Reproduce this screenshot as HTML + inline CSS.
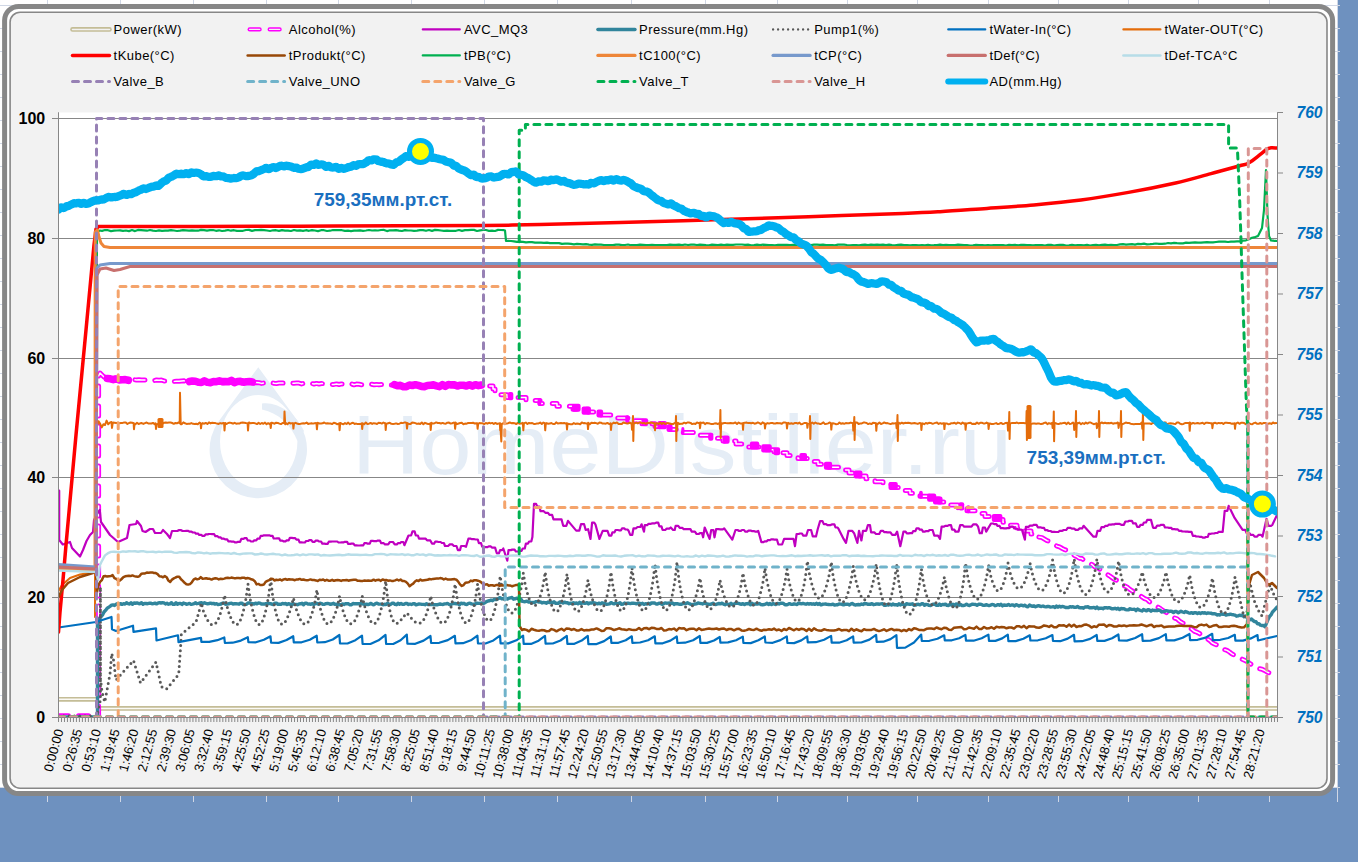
<!DOCTYPE html>
<html><head><meta charset="utf-8"><title>chart</title>
<style>html,body{margin:0;padding:0;width:1358px;height:862px;overflow:hidden;background:#6e91bf;}svg{display:block}</style>
</head><body>
<svg width="1358" height="862" viewBox="0 0 1358 862">
<rect x="0" y="0" width="1358" height="862" fill="#6e91bf"/>
<rect x="0" y="0" width="1338" height="788" fill="#ffffff"/>
<path d="M0 5.5H1340M0 28.5H1340M0 51.5H1340M0 74.5H1340M0 97.5H1340M0 120.5H1340M0 143.5H1340M0 166.5H1340M0 189.5H1340M0 212.5H1340M0 235.5H1340M0 258.5H1340M0 281.5H1340M0 304.5H1340M0 327.5H1340M0 350.5H1340M0 373.5H1340M0 396.5H1340M0 419.5H1340M0 442.5H1340M0 465.5H1340M0 488.5H1340M0 511.5H1340M0 534.5H1340M0 557.5H1340M0 580.5H1340M0 603.5H1340M0 626.5H1340M0 649.5H1340M0 672.5H1340M0 695.5H1340M0 718.5H1340M0 741.5H1340M0 764.5H1340M0 787.5H1340M47.5 0V802M120.5 0V802M193.5 0V802M266.5 0V802M338.5 0V802M411.5 0V802M484.5 0V802M557.5 0V802M631.5 0V802M705.5 0V802M777.5 0V802M847.5 0V802M917.5 0V802M988.5 0V802M1058.5 0V802M1128.5 0V802M1198.5 0V802M1269.5 0V802M1337.5 0V802" stroke="#d0d7e5" stroke-width="1" fill="none"/>
<rect x="4.6" y="6.5" width="1328" height="787" rx="14" ry="14" fill="#ffffff" stroke="#878787" stroke-width="5"/>
<rect x="10.1" y="12.2" width="1316.9" height="776" rx="10" ry="10" fill="#f2f2f2" stroke="#878787" stroke-width="1.6"/>
<rect x="58.5" y="112.5" width="1219.0" height="605.0" fill="#ffffff"/>
<g fill="#e5edf6"><path fill-rule="evenodd" d="M258.3 367.2 L297.55 420.7 A48.7 48.7 0 1 1 219.05 420.7 Z M258.7 395 A38.7 46.5 0 1 0 258.71 395 Z"/><path d="M262 403.5 C276 401 296 413 304 431 L297.5 441 C291 425 279 413 262 409.5 Z"/></g>
<text x="352" y="474" font-family='"Liberation Sans", sans-serif' font-size="84" fill="#e5edf6" textLength="660" lengthAdjust="spacingAndGlyphs">HomeDistiller.ru</text>
<path d="M52 118.5H1277.5M52 238.5H1277.5M52 358.5H1277.5M52 477.5H1277.5M52 597.5H1277.5M52 717.5H1277.5M58.5 112.5V717.5M1277.5 112.5V717.5M1277.5 112.5H1283M1277.5 173.0H1283M1277.5 233.5H1283M1277.5 294.0H1283M1277.5 354.5H1283M1277.5 415.0H1283M1277.5 475.5H1283M1277.5 536.0H1283M1277.5 596.5H1283M1277.5 657.0H1283M1277.5 717.5H1283M58.50 717.5V722M61.49 717.5V722M64.48 717.5V722M67.46 717.5V722M70.45 717.5V722M73.44 717.5V722M76.43 717.5V722M79.41 717.5V722M82.40 717.5V722M85.39 717.5V722M88.38 717.5V722M91.37 717.5V722M94.35 717.5V722M97.34 717.5V722M100.33 717.5V722M103.32 717.5V722M106.30 717.5V722M109.29 717.5V722M112.28 717.5V722M115.27 717.5V722M118.25 717.5V722M121.24 717.5V722M124.23 717.5V722M127.22 717.5V722M130.21 717.5V722M133.19 717.5V722M136.18 717.5V722M139.17 717.5V722M142.16 717.5V722M145.14 717.5V722M148.13 717.5V722M151.12 717.5V722M154.11 717.5V722M157.10 717.5V722M160.08 717.5V722M163.07 717.5V722M166.06 717.5V722M169.05 717.5V722M172.03 717.5V722M175.02 717.5V722M178.01 717.5V722M181.00 717.5V722M183.99 717.5V722M186.97 717.5V722M189.96 717.5V722M192.95 717.5V722M195.94 717.5V722M198.92 717.5V722M201.91 717.5V722M204.90 717.5V722M207.89 717.5V722M210.88 717.5V722M213.86 717.5V722M216.85 717.5V722M219.84 717.5V722M222.83 717.5V722M225.81 717.5V722M228.80 717.5V722M231.79 717.5V722M234.78 717.5V722M237.76 717.5V722M240.75 717.5V722M243.74 717.5V722M246.73 717.5V722M249.72 717.5V722M252.70 717.5V722M255.69 717.5V722M258.68 717.5V722M261.67 717.5V722M264.65 717.5V722M267.64 717.5V722M270.63 717.5V722M273.62 717.5V722M276.61 717.5V722M279.59 717.5V722M282.58 717.5V722M285.57 717.5V722M288.56 717.5V722M291.54 717.5V722M294.53 717.5V722M297.52 717.5V722M300.51 717.5V722M303.50 717.5V722M306.48 717.5V722M309.47 717.5V722M312.46 717.5V722M315.45 717.5V722M318.43 717.5V722M321.42 717.5V722M324.41 717.5V722M327.40 717.5V722M330.38 717.5V722M333.37 717.5V722M336.36 717.5V722M339.35 717.5V722M342.34 717.5V722M345.32 717.5V722M348.31 717.5V722M351.30 717.5V722M354.29 717.5V722M357.27 717.5V722M360.26 717.5V722M363.25 717.5V722M366.24 717.5V722M369.23 717.5V722M372.21 717.5V722M375.20 717.5V722M378.19 717.5V722M381.18 717.5V722M384.16 717.5V722M387.15 717.5V722M390.14 717.5V722M393.13 717.5V722M396.12 717.5V722M399.10 717.5V722M402.09 717.5V722M405.08 717.5V722M408.07 717.5V722M411.05 717.5V722M414.04 717.5V722M417.03 717.5V722M420.02 717.5V722M423.00 717.5V722M425.99 717.5V722M428.98 717.5V722M431.97 717.5V722M434.96 717.5V722M437.94 717.5V722M440.93 717.5V722M443.92 717.5V722M446.91 717.5V722M449.89 717.5V722M452.88 717.5V722M455.87 717.5V722M458.86 717.5V722M461.85 717.5V722M464.83 717.5V722M467.82 717.5V722M470.81 717.5V722M473.80 717.5V722M476.78 717.5V722M479.77 717.5V722M482.76 717.5V722M485.75 717.5V722M488.74 717.5V722M491.72 717.5V722M494.71 717.5V722M497.70 717.5V722M500.69 717.5V722M503.67 717.5V722M506.66 717.5V722M509.65 717.5V722M512.64 717.5V722M515.62 717.5V722M518.61 717.5V722M521.60 717.5V722M524.59 717.5V722M527.58 717.5V722M530.56 717.5V722M533.55 717.5V722M536.54 717.5V722M539.53 717.5V722M542.51 717.5V722M545.50 717.5V722M548.49 717.5V722M551.48 717.5V722M554.47 717.5V722M557.45 717.5V722M560.44 717.5V722M563.43 717.5V722M566.42 717.5V722M569.40 717.5V722M572.39 717.5V722M575.38 717.5V722M578.37 717.5V722M581.36 717.5V722M584.34 717.5V722M587.33 717.5V722M590.32 717.5V722M593.31 717.5V722M596.29 717.5V722M599.28 717.5V722M602.27 717.5V722M605.26 717.5V722M608.25 717.5V722M611.23 717.5V722M614.22 717.5V722M617.21 717.5V722M620.20 717.5V722M623.18 717.5V722M626.17 717.5V722M629.16 717.5V722M632.15 717.5V722M635.13 717.5V722M638.12 717.5V722M641.11 717.5V722M644.10 717.5V722M647.09 717.5V722M650.07 717.5V722M653.06 717.5V722M656.05 717.5V722M659.04 717.5V722M662.02 717.5V722M665.01 717.5V722M668.00 717.5V722M670.99 717.5V722M673.98 717.5V722M676.96 717.5V722M679.95 717.5V722M682.94 717.5V722M685.93 717.5V722M688.91 717.5V722M691.90 717.5V722M694.89 717.5V722M697.88 717.5V722M700.87 717.5V722M703.85 717.5V722M706.84 717.5V722M709.83 717.5V722M712.82 717.5V722M715.80 717.5V722M718.79 717.5V722M721.78 717.5V722M724.77 717.5V722M727.75 717.5V722M730.74 717.5V722M733.73 717.5V722M736.72 717.5V722M739.71 717.5V722M742.69 717.5V722M745.68 717.5V722M748.67 717.5V722M751.66 717.5V722M754.64 717.5V722M757.63 717.5V722M760.62 717.5V722M763.61 717.5V722M766.60 717.5V722M769.58 717.5V722M772.57 717.5V722M775.56 717.5V722M778.55 717.5V722M781.53 717.5V722M784.52 717.5V722M787.51 717.5V722M790.50 717.5V722M793.49 717.5V722M796.47 717.5V722M799.46 717.5V722M802.45 717.5V722M805.44 717.5V722M808.42 717.5V722M811.41 717.5V722M814.40 717.5V722M817.39 717.5V722M820.38 717.5V722M823.36 717.5V722M826.35 717.5V722M829.34 717.5V722M832.33 717.5V722M835.31 717.5V722M838.30 717.5V722M841.29 717.5V722M844.28 717.5V722M847.26 717.5V722M850.25 717.5V722M853.24 717.5V722M856.23 717.5V722M859.22 717.5V722M862.20 717.5V722M865.19 717.5V722M868.18 717.5V722M871.17 717.5V722M874.15 717.5V722M877.14 717.5V722M880.13 717.5V722M883.12 717.5V722M886.11 717.5V722M889.09 717.5V722M892.08 717.5V722M895.07 717.5V722M898.06 717.5V722M901.04 717.5V722M904.03 717.5V722M907.02 717.5V722M910.01 717.5V722M913.00 717.5V722M915.98 717.5V722M918.97 717.5V722M921.96 717.5V722M924.95 717.5V722M927.93 717.5V722M930.92 717.5V722M933.91 717.5V722M936.90 717.5V722M939.88 717.5V722M942.87 717.5V722M945.86 717.5V722M948.85 717.5V722M951.84 717.5V722M954.82 717.5V722M957.81 717.5V722M960.80 717.5V722M963.79 717.5V722M966.77 717.5V722M969.76 717.5V722M972.75 717.5V722M975.74 717.5V722M978.73 717.5V722M981.71 717.5V722M984.70 717.5V722M987.69 717.5V722M990.68 717.5V722M993.66 717.5V722M996.65 717.5V722M999.64 717.5V722M1002.63 717.5V722M1005.62 717.5V722M1008.60 717.5V722M1011.59 717.5V722M1014.58 717.5V722M1017.57 717.5V722M1020.55 717.5V722M1023.54 717.5V722M1026.53 717.5V722M1029.52 717.5V722M1032.50 717.5V722M1035.49 717.5V722M1038.48 717.5V722M1041.47 717.5V722M1044.46 717.5V722M1047.44 717.5V722M1050.43 717.5V722M1053.42 717.5V722M1056.41 717.5V722M1059.39 717.5V722M1062.38 717.5V722M1065.37 717.5V722M1068.36 717.5V722M1071.35 717.5V722M1074.33 717.5V722M1077.32 717.5V722M1080.31 717.5V722M1083.30 717.5V722M1086.28 717.5V722M1089.27 717.5V722M1092.26 717.5V722M1095.25 717.5V722M1098.24 717.5V722M1101.22 717.5V722M1104.21 717.5V722M1107.20 717.5V722M1110.19 717.5V722M1113.17 717.5V722M1116.16 717.5V722M1119.15 717.5V722M1122.14 717.5V722M1125.12 717.5V722M1128.11 717.5V722M1131.10 717.5V722M1134.09 717.5V722M1137.08 717.5V722M1140.06 717.5V722M1143.05 717.5V722M1146.04 717.5V722M1149.03 717.5V722M1152.01 717.5V722M1155.00 717.5V722M1157.99 717.5V722M1160.98 717.5V722M1163.97 717.5V722M1166.95 717.5V722M1169.94 717.5V722M1172.93 717.5V722M1175.92 717.5V722M1178.90 717.5V722M1181.89 717.5V722M1184.88 717.5V722M1187.87 717.5V722M1190.86 717.5V722M1193.84 717.5V722M1196.83 717.5V722M1199.82 717.5V722M1202.81 717.5V722M1205.79 717.5V722M1208.78 717.5V722M1211.77 717.5V722M1214.76 717.5V722M1217.75 717.5V722M1220.73 717.5V722M1223.72 717.5V722M1226.71 717.5V722M1229.70 717.5V722M1232.68 717.5V722M1235.67 717.5V722M1238.66 717.5V722M1241.65 717.5V722M1244.63 717.5V722M1247.62 717.5V722M1250.61 717.5V722M1253.60 717.5V722M1256.59 717.5V722M1259.57 717.5V722M1262.56 717.5V722M1265.55 717.5V722M1268.54 717.5V722M1271.52 717.5V722M1274.51 717.5V722M1277.50 717.5V722" stroke="#878787" stroke-width="1" fill="none"/>
<text x="45.2" y="124.0" text-anchor="end" font-family='"Liberation Sans", sans-serif' font-weight="bold" font-size="16" fill="#000">100</text>
<text x="45.2" y="244.0" text-anchor="end" font-family='"Liberation Sans", sans-serif' font-weight="bold" font-size="16" fill="#000">80</text>
<text x="45.2" y="364.0" text-anchor="end" font-family='"Liberation Sans", sans-serif' font-weight="bold" font-size="16" fill="#000">60</text>
<text x="45.2" y="483.0" text-anchor="end" font-family='"Liberation Sans", sans-serif' font-weight="bold" font-size="16" fill="#000">40</text>
<text x="45.2" y="603.0" text-anchor="end" font-family='"Liberation Sans", sans-serif' font-weight="bold" font-size="16" fill="#000">20</text>
<text x="45.2" y="723.0" text-anchor="end" font-family='"Liberation Sans", sans-serif' font-weight="bold" font-size="16" fill="#000">0</text>
<text x="1296.5" y="117.7" font-family='"Liberation Sans", sans-serif' font-weight="bold" font-style="italic" font-size="15.6" fill="#0070c0">760</text>
<text x="1296.5" y="178.2" font-family='"Liberation Sans", sans-serif' font-weight="bold" font-style="italic" font-size="15.6" fill="#0070c0">759</text>
<text x="1296.5" y="238.7" font-family='"Liberation Sans", sans-serif' font-weight="bold" font-style="italic" font-size="15.6" fill="#0070c0">758</text>
<text x="1296.5" y="299.2" font-family='"Liberation Sans", sans-serif' font-weight="bold" font-style="italic" font-size="15.6" fill="#0070c0">757</text>
<text x="1296.5" y="359.7" font-family='"Liberation Sans", sans-serif' font-weight="bold" font-style="italic" font-size="15.6" fill="#0070c0">756</text>
<text x="1296.5" y="420.2" font-family='"Liberation Sans", sans-serif' font-weight="bold" font-style="italic" font-size="15.6" fill="#0070c0">755</text>
<text x="1296.5" y="480.7" font-family='"Liberation Sans", sans-serif' font-weight="bold" font-style="italic" font-size="15.6" fill="#0070c0">754</text>
<text x="1296.5" y="541.2" font-family='"Liberation Sans", sans-serif' font-weight="bold" font-style="italic" font-size="15.6" fill="#0070c0">753</text>
<text x="1296.5" y="601.7" font-family='"Liberation Sans", sans-serif' font-weight="bold" font-style="italic" font-size="15.6" fill="#0070c0">752</text>
<text x="1296.5" y="662.2" font-family='"Liberation Sans", sans-serif' font-weight="bold" font-style="italic" font-size="15.6" fill="#0070c0">751</text>
<text x="1296.5" y="722.7" font-family='"Liberation Sans", sans-serif' font-weight="bold" font-style="italic" font-size="15.6" fill="#0070c0">750</text>
<text transform="translate(63.50,730.5) rotate(-75)" text-anchor="end" font-family='"Liberation Sans", sans-serif' font-size="13" fill="#000">0:00:00</text>
<text transform="translate(82.27,730.5) rotate(-75)" text-anchor="end" font-family='"Liberation Sans", sans-serif' font-size="13" fill="#000">0:26:35</text>
<text transform="translate(101.04,730.5) rotate(-75)" text-anchor="end" font-family='"Liberation Sans", sans-serif' font-size="13" fill="#000">0:53:10</text>
<text transform="translate(119.81,730.5) rotate(-75)" text-anchor="end" font-family='"Liberation Sans", sans-serif' font-size="13" fill="#000">1:19:45</text>
<text transform="translate(138.58,730.5) rotate(-75)" text-anchor="end" font-family='"Liberation Sans", sans-serif' font-size="13" fill="#000">1:46:20</text>
<text transform="translate(157.35,730.5) rotate(-75)" text-anchor="end" font-family='"Liberation Sans", sans-serif' font-size="13" fill="#000">2:12:55</text>
<text transform="translate(176.12,730.5) rotate(-75)" text-anchor="end" font-family='"Liberation Sans", sans-serif' font-size="13" fill="#000">2:39:30</text>
<text transform="translate(194.89,730.5) rotate(-75)" text-anchor="end" font-family='"Liberation Sans", sans-serif' font-size="13" fill="#000">3:06:05</text>
<text transform="translate(213.66,730.5) rotate(-75)" text-anchor="end" font-family='"Liberation Sans", sans-serif' font-size="13" fill="#000">3:32:40</text>
<text transform="translate(232.43,730.5) rotate(-75)" text-anchor="end" font-family='"Liberation Sans", sans-serif' font-size="13" fill="#000">3:59:15</text>
<text transform="translate(251.20,730.5) rotate(-75)" text-anchor="end" font-family='"Liberation Sans", sans-serif' font-size="13" fill="#000">4:25:50</text>
<text transform="translate(269.97,730.5) rotate(-75)" text-anchor="end" font-family='"Liberation Sans", sans-serif' font-size="13" fill="#000">4:52:25</text>
<text transform="translate(288.74,730.5) rotate(-75)" text-anchor="end" font-family='"Liberation Sans", sans-serif' font-size="13" fill="#000">5:19:00</text>
<text transform="translate(307.51,730.5) rotate(-75)" text-anchor="end" font-family='"Liberation Sans", sans-serif' font-size="13" fill="#000">5:45:35</text>
<text transform="translate(326.28,730.5) rotate(-75)" text-anchor="end" font-family='"Liberation Sans", sans-serif' font-size="13" fill="#000">6:12:10</text>
<text transform="translate(345.05,730.5) rotate(-75)" text-anchor="end" font-family='"Liberation Sans", sans-serif' font-size="13" fill="#000">6:38:45</text>
<text transform="translate(363.82,730.5) rotate(-75)" text-anchor="end" font-family='"Liberation Sans", sans-serif' font-size="13" fill="#000">7:05:20</text>
<text transform="translate(382.59,730.5) rotate(-75)" text-anchor="end" font-family='"Liberation Sans", sans-serif' font-size="13" fill="#000">7:31:55</text>
<text transform="translate(401.36,730.5) rotate(-75)" text-anchor="end" font-family='"Liberation Sans", sans-serif' font-size="13" fill="#000">7:58:30</text>
<text transform="translate(420.13,730.5) rotate(-75)" text-anchor="end" font-family='"Liberation Sans", sans-serif' font-size="13" fill="#000">8:25:05</text>
<text transform="translate(438.90,730.5) rotate(-75)" text-anchor="end" font-family='"Liberation Sans", sans-serif' font-size="13" fill="#000">8:51:40</text>
<text transform="translate(457.67,730.5) rotate(-75)" text-anchor="end" font-family='"Liberation Sans", sans-serif' font-size="13" fill="#000">9:18:15</text>
<text transform="translate(476.44,730.5) rotate(-75)" text-anchor="end" font-family='"Liberation Sans", sans-serif' font-size="13" fill="#000">9:44:50</text>
<text transform="translate(495.21,730.5) rotate(-75)" text-anchor="end" font-family='"Liberation Sans", sans-serif' font-size="13" fill="#000">10:11:25</text>
<text transform="translate(513.98,730.5) rotate(-75)" text-anchor="end" font-family='"Liberation Sans", sans-serif' font-size="13" fill="#000">10:38:00</text>
<text transform="translate(532.75,730.5) rotate(-75)" text-anchor="end" font-family='"Liberation Sans", sans-serif' font-size="13" fill="#000">11:04:35</text>
<text transform="translate(551.52,730.5) rotate(-75)" text-anchor="end" font-family='"Liberation Sans", sans-serif' font-size="13" fill="#000">11:31:10</text>
<text transform="translate(570.29,730.5) rotate(-75)" text-anchor="end" font-family='"Liberation Sans", sans-serif' font-size="13" fill="#000">11:57:45</text>
<text transform="translate(589.06,730.5) rotate(-75)" text-anchor="end" font-family='"Liberation Sans", sans-serif' font-size="13" fill="#000">12:24:20</text>
<text transform="translate(607.83,730.5) rotate(-75)" text-anchor="end" font-family='"Liberation Sans", sans-serif' font-size="13" fill="#000">12:50:55</text>
<text transform="translate(626.60,730.5) rotate(-75)" text-anchor="end" font-family='"Liberation Sans", sans-serif' font-size="13" fill="#000">13:17:30</text>
<text transform="translate(645.37,730.5) rotate(-75)" text-anchor="end" font-family='"Liberation Sans", sans-serif' font-size="13" fill="#000">13:44:05</text>
<text transform="translate(664.14,730.5) rotate(-75)" text-anchor="end" font-family='"Liberation Sans", sans-serif' font-size="13" fill="#000">14:10:40</text>
<text transform="translate(682.91,730.5) rotate(-75)" text-anchor="end" font-family='"Liberation Sans", sans-serif' font-size="13" fill="#000">14:37:15</text>
<text transform="translate(701.68,730.5) rotate(-75)" text-anchor="end" font-family='"Liberation Sans", sans-serif' font-size="13" fill="#000">15:03:50</text>
<text transform="translate(720.45,730.5) rotate(-75)" text-anchor="end" font-family='"Liberation Sans", sans-serif' font-size="13" fill="#000">15:30:25</text>
<text transform="translate(739.22,730.5) rotate(-75)" text-anchor="end" font-family='"Liberation Sans", sans-serif' font-size="13" fill="#000">15:57:00</text>
<text transform="translate(757.99,730.5) rotate(-75)" text-anchor="end" font-family='"Liberation Sans", sans-serif' font-size="13" fill="#000">16:23:35</text>
<text transform="translate(776.76,730.5) rotate(-75)" text-anchor="end" font-family='"Liberation Sans", sans-serif' font-size="13" fill="#000">16:50:10</text>
<text transform="translate(795.53,730.5) rotate(-75)" text-anchor="end" font-family='"Liberation Sans", sans-serif' font-size="13" fill="#000">17:16:45</text>
<text transform="translate(814.30,730.5) rotate(-75)" text-anchor="end" font-family='"Liberation Sans", sans-serif' font-size="13" fill="#000">17:43:20</text>
<text transform="translate(833.07,730.5) rotate(-75)" text-anchor="end" font-family='"Liberation Sans", sans-serif' font-size="13" fill="#000">18:09:55</text>
<text transform="translate(851.84,730.5) rotate(-75)" text-anchor="end" font-family='"Liberation Sans", sans-serif' font-size="13" fill="#000">18:36:30</text>
<text transform="translate(870.61,730.5) rotate(-75)" text-anchor="end" font-family='"Liberation Sans", sans-serif' font-size="13" fill="#000">19:03:05</text>
<text transform="translate(889.38,730.5) rotate(-75)" text-anchor="end" font-family='"Liberation Sans", sans-serif' font-size="13" fill="#000">19:29:40</text>
<text transform="translate(908.15,730.5) rotate(-75)" text-anchor="end" font-family='"Liberation Sans", sans-serif' font-size="13" fill="#000">19:56:15</text>
<text transform="translate(926.92,730.5) rotate(-75)" text-anchor="end" font-family='"Liberation Sans", sans-serif' font-size="13" fill="#000">20:22:50</text>
<text transform="translate(945.69,730.5) rotate(-75)" text-anchor="end" font-family='"Liberation Sans", sans-serif' font-size="13" fill="#000">20:49:25</text>
<text transform="translate(964.46,730.5) rotate(-75)" text-anchor="end" font-family='"Liberation Sans", sans-serif' font-size="13" fill="#000">21:16:00</text>
<text transform="translate(983.23,730.5) rotate(-75)" text-anchor="end" font-family='"Liberation Sans", sans-serif' font-size="13" fill="#000">21:42:35</text>
<text transform="translate(1002.00,730.5) rotate(-75)" text-anchor="end" font-family='"Liberation Sans", sans-serif' font-size="13" fill="#000">22:09:10</text>
<text transform="translate(1020.77,730.5) rotate(-75)" text-anchor="end" font-family='"Liberation Sans", sans-serif' font-size="13" fill="#000">22:35:45</text>
<text transform="translate(1039.54,730.5) rotate(-75)" text-anchor="end" font-family='"Liberation Sans", sans-serif' font-size="13" fill="#000">23:02:20</text>
<text transform="translate(1058.31,730.5) rotate(-75)" text-anchor="end" font-family='"Liberation Sans", sans-serif' font-size="13" fill="#000">23:28:55</text>
<text transform="translate(1077.08,730.5) rotate(-75)" text-anchor="end" font-family='"Liberation Sans", sans-serif' font-size="13" fill="#000">23:55:30</text>
<text transform="translate(1095.85,730.5) rotate(-75)" text-anchor="end" font-family='"Liberation Sans", sans-serif' font-size="13" fill="#000">24:22:05</text>
<text transform="translate(1114.62,730.5) rotate(-75)" text-anchor="end" font-family='"Liberation Sans", sans-serif' font-size="13" fill="#000">24:48:40</text>
<text transform="translate(1133.39,730.5) rotate(-75)" text-anchor="end" font-family='"Liberation Sans", sans-serif' font-size="13" fill="#000">25:15:15</text>
<text transform="translate(1152.16,730.5) rotate(-75)" text-anchor="end" font-family='"Liberation Sans", sans-serif' font-size="13" fill="#000">25:41:50</text>
<text transform="translate(1170.93,730.5) rotate(-75)" text-anchor="end" font-family='"Liberation Sans", sans-serif' font-size="13" fill="#000">26:08:25</text>
<text transform="translate(1189.70,730.5) rotate(-75)" text-anchor="end" font-family='"Liberation Sans", sans-serif' font-size="13" fill="#000">26:35:00</text>
<text transform="translate(1208.47,730.5) rotate(-75)" text-anchor="end" font-family='"Liberation Sans", sans-serif' font-size="13" fill="#000">27:01:35</text>
<text transform="translate(1227.24,730.5) rotate(-75)" text-anchor="end" font-family='"Liberation Sans", sans-serif' font-size="13" fill="#000">27:28:10</text>
<text transform="translate(1246.01,730.5) rotate(-75)" text-anchor="end" font-family='"Liberation Sans", sans-serif' font-size="13" fill="#000">27:54:45</text>
<text transform="translate(1264.78,730.5) rotate(-75)" text-anchor="end" font-family='"Liberation Sans", sans-serif' font-size="13" fill="#000">28:21:20</text>
<path d="M72.5 29.4H109.5" fill="none" stroke="#c4bd97" stroke-width="4.6" stroke-linejoin="round" stroke-linecap="round" />
<path d="M72.5 29.4H109.5" fill="none" stroke="#f2f2f2" stroke-width="1.5" stroke-linejoin="round" stroke-linecap="round" />
<text x="113.6" y="34.1" font-family='"Liberation Sans", sans-serif' font-size="13" letter-spacing="0.45" fill="#000">Power(kW)</text>
<path d="M249.65 29.4H284.65" fill="none" stroke="#ff00ff" stroke-width="4.2" stroke-linejoin="round" stroke-linecap="round" stroke-dasharray="10 10"/>
<path d="M249.65 29.4H284.65" fill="none" stroke="#f2f2f2" stroke-width="1.4" stroke-linejoin="round" stroke-linecap="round" stroke-dasharray="10 10"/>
<text x="288.8" y="34.1" font-family='"Liberation Sans", sans-serif' font-size="13" letter-spacing="0.45" fill="#000">Alcohol(%)</text>
<path d="M422.8 29.4H459.8" fill="none" stroke="#c000c0" stroke-width="2.2" stroke-linejoin="round" stroke-linecap="round" />
<text x="463.9" y="34.1" font-family='"Liberation Sans", sans-serif' font-size="13" letter-spacing="0.45" fill="#000">AVC_MQ3</text>
<path d="M597.95 29.4H634.95" fill="none" stroke="#31859c" stroke-width="3.5" stroke-linejoin="round" stroke-linecap="round" />
<text x="639.1" y="34.1" font-family='"Liberation Sans", sans-serif' font-size="13" letter-spacing="0.45" fill="#000">Pressure(mm.Hg)</text>
<path d="M773.1 29.4H810.1" fill="none" stroke="#595959" stroke-width="2.4" stroke-linejoin="round" stroke-linecap="round" stroke-dasharray="0 5"/>
<text x="814.2" y="34.1" font-family='"Liberation Sans", sans-serif' font-size="13" letter-spacing="0.45" fill="#000">Pump1(%)</text>
<path d="M948.25 29.4H985.25" fill="none" stroke="#0070c0" stroke-width="2.2" stroke-linejoin="round" stroke-linecap="round" />
<text x="989.4" y="34.1" font-family='"Liberation Sans", sans-serif' font-size="13" letter-spacing="0.45" fill="#000">tWater-In(°C)</text>
<path d="M1123.4 29.4H1160.4" fill="none" stroke="#e46c0a" stroke-width="2.2" stroke-linejoin="round" stroke-linecap="round" />
<text x="1164.5" y="34.1" font-family='"Liberation Sans", sans-serif' font-size="13" letter-spacing="0.45" fill="#000">tWater-OUT(°C)</text>
<path d="M72.5 55.4H109.5" fill="none" stroke="#ff0000" stroke-width="3.5" stroke-linejoin="round" stroke-linecap="round" />
<text x="113.6" y="60.1" font-family='"Liberation Sans", sans-serif' font-size="13" letter-spacing="0.45" fill="#000">tKube(°C)</text>
<path d="M247.65 55.4H284.65" fill="none" stroke="#984807" stroke-width="2.5" stroke-linejoin="round" stroke-linecap="round" />
<text x="288.8" y="60.1" font-family='"Liberation Sans", sans-serif' font-size="13" letter-spacing="0.45" fill="#000">tProdukt(°C)</text>
<path d="M422.8 55.4H459.8" fill="none" stroke="#00b050" stroke-width="2.3" stroke-linejoin="round" stroke-linecap="round" />
<text x="463.9" y="60.1" font-family='"Liberation Sans", sans-serif' font-size="13" letter-spacing="0.45" fill="#000">tPB(°C)</text>
<path d="M597.95 55.4H634.95" fill="none" stroke="#ee8639" stroke-width="3.3" stroke-linejoin="round" stroke-linecap="round" />
<text x="639.1" y="60.1" font-family='"Liberation Sans", sans-serif' font-size="13" letter-spacing="0.45" fill="#000">tC100(°C)</text>
<path d="M773.1 55.4H810.1" fill="none" stroke="#7799cc" stroke-width="3.3" stroke-linejoin="round" stroke-linecap="round" />
<text x="814.2" y="60.1" font-family='"Liberation Sans", sans-serif' font-size="13" letter-spacing="0.45" fill="#000">tCP(°C)</text>
<path d="M948.25 55.4H985.25" fill="none" stroke="#c8706e" stroke-width="3.3" stroke-linejoin="round" stroke-linecap="round" />
<text x="989.4" y="60.1" font-family='"Liberation Sans", sans-serif' font-size="13" letter-spacing="0.45" fill="#000">tDef(°C)</text>
<path d="M1123.4 55.4H1160.4" fill="none" stroke="#b7dde8" stroke-width="2.5" stroke-linejoin="round" stroke-linecap="round" />
<text x="1164.5" y="60.1" font-family='"Liberation Sans", sans-serif' font-size="13" letter-spacing="0.45" fill="#000">tDef-TCA°C</text>
<path d="M72.5 81.5H109.5" fill="none" stroke="#9781b5" stroke-width="3" stroke-linejoin="round" stroke-linecap="round" stroke-dasharray="6 6"/>
<text x="113.6" y="86.2" font-family='"Liberation Sans", sans-serif' font-size="13" letter-spacing="0.45" fill="#000">Valve_B</text>
<path d="M247.65 81.5H284.65" fill="none" stroke="#70b3ca" stroke-width="3" stroke-linejoin="round" stroke-linecap="round" stroke-dasharray="6 6"/>
<text x="288.8" y="86.2" font-family='"Liberation Sans", sans-serif' font-size="13" letter-spacing="0.45" fill="#000">Valve_UNO</text>
<path d="M422.8 81.5H459.8" fill="none" stroke="#f4a46c" stroke-width="3" stroke-linejoin="round" stroke-linecap="round" stroke-dasharray="6 6"/>
<text x="463.9" y="86.2" font-family='"Liberation Sans", sans-serif' font-size="13" letter-spacing="0.45" fill="#000">Valve_G</text>
<path d="M597.95 81.5H634.95" fill="none" stroke="#00b050" stroke-width="3" stroke-linejoin="round" stroke-linecap="round" stroke-dasharray="6 6"/>
<text x="639.1" y="86.2" font-family='"Liberation Sans", sans-serif' font-size="13" letter-spacing="0.45" fill="#000">Valve_T</text>
<path d="M773.1 81.5H810.1" fill="none" stroke="#d99694" stroke-width="3" stroke-linejoin="round" stroke-linecap="round" stroke-dasharray="6 6"/>
<text x="814.2" y="86.2" font-family='"Liberation Sans", sans-serif' font-size="13" letter-spacing="0.45" fill="#000">Valve_H</text>
<path d="M948.25 81.5H985.25" fill="none" stroke="#00b0f0" stroke-width="6" stroke-linejoin="round" stroke-linecap="round" />
<text x="989.4" y="86.2" font-family='"Liberation Sans", sans-serif' font-size="13" letter-spacing="0.45" fill="#000">AD(mm.Hg)</text>
<defs><clipPath id="pc"><rect x="58.5" y="112.5" width="1219" height="605"/></clipPath></defs><g clip-path="url(#pc)"><path d="M58.5 699.3L96.5 699.3M99.5 708.4L1277.5 708.4" fill="none" stroke="#c4bd97" stroke-width="4.7" stroke-linejoin="round" stroke-linecap="butt" />
<path d="M58.5 699.3L96.5 699.3M99.5 708.4L1277.5 708.4" fill="none" stroke="#fbfaf6" stroke-width="1.5" stroke-linejoin="round" stroke-linecap="butt" />
<path d="M58.5 715.8L97.5 715.8L98.6 715.8L98.6 376.0L100.0 373.0L104.0 377.0L131 379.5L131.5 379.5L134.0 379.7L136.5 380.1L139.0 379.8L141.5 379.9L144.0 380.1L146.5 379.7L149.0 380.1L151.5 380.3L154.0 380.6L156.5 380.0L159.0 380.3L161.5 380.1L164.0 380.9L166.5 380.9L169.0 380.3L171.5 381.4L174.0 381.4L176.5 381.2L179.0 381.2L181.5 380.9L184.0 380.8L186.5 381.4L189.0 381.0L191.5 381.2L194.0 381.3L196.5 381.2L199.0 381.7L201.5 381.7L204.0 382.1L206.5 381.9L209.0 382.0L211.5 382.0L214.0 382.2L216.5 382.0L219.0 381.9L221.5 382.7L224.0 382.7L226.5 382.6L229.0 382.5L231.5 382.2L234.0 382.2L236.5 382.3L239.0 382.1L241.5 382.9L244.0 382.6L246.5 383.1L249.0 382.7L251.5 383.3L254.0 383.2L256.5 382.4L259.0 382.7L261.5 383.4L264.0 383.0L266.5 383.6L269.0 383.0L271.5 382.7L274.0 383.3L276.5 383.5L279.0 383.0L281.5 382.9L284.0 383.2L286.5 383.8L289.0 383.7L291.5 383.1L294.0 383.2L296.5 383.1L299.0 383.1L301.5 383.9L304.0 383.3L306.5 383.7L309.0 383.6L311.5 383.4L314.0 384.0L316.5 383.4L319.0 384.0L321.5 383.5L324.0 383.8L326.5 383.7L329.0 383.8L331.5 384.5L334.0 384.4L336.5 383.9L339.0 384.5L341.5 383.9L344.0 384.1L346.5 384.6L349.0 384.4L351.5 383.9L354.0 384.8L356.5 384.1L359.0 384.2L361.5 384.7L364.0 384.3L366.5 384.3L369.0 384.1L371.5 384.2L374.0 384.7L376.5 384.4L379.0 384.8L381.5 384.6L384.0 384.7L386.5 385.3L389.0 384.8L391.5 385.0L394.0 385.3L396.5 384.6L399.0 384.6L401.5 385.4L404.0 385.4L406.5 384.8L409.0 384.8L411.5 385.4L414.0 385.6L416.5 384.9L419.0 385.7L421.5 385.6L424.0 385.4L426.5 385.2L429.0 384.9L431.5 384.9L434.0 385.9L436.5 385.2L439.0 385.7L441.5 385.2L444.0 385.8L446.5 385.6L449.0 385.4L451.5 385.3L454.0 385.9L456.5 385.2L459.0 385.4L461.5 385.8L464.0 386.1L466.5 385.9L469.0 385.6L471.5 386.3L474.0 385.6L476.5 385.4L479.0 385.7L481.5 385.9L484.0 385.5L486.0 386.0L493.0 386.0L493.0 388.9L495.0 388.9L495.0 391.8L499.0 391.8L499.0 394.7L507.0 394.7L507.0 397.6L526.0 397.6L526.0 400.5L540.0 400.5L540.0 403.4L557.0 403.4L557.0 406.3L573.0 406.3L573.0 409.2L588.0 409.2L588.0 412.1L601.0 412.1L601.0 415.0L615.0 415.0L615.0 417.9L628.0 417.9L628.0 420.8L642.0 420.8L642.0 423.7L655.0 423.7L655.0 426.6L669.0 426.6L669.0 429.5L682.0 429.5L682.0 432.4L696.0 432.4L696.0 435.3L710.0 435.3L710.0 438.2L723.0 438.2L723.0 441.1L736.0 441.1L736.0 444.0L748.0 444.0L748.0 446.9L761.0 446.9L761.0 449.8L774.0 449.8L774.0 452.7L787.0 452.7L787.0 455.6L798.0 455.6L798.0 458.5L808.0 458.5L808.0 461.4L818.0 461.4L818.0 464.3L828.0 464.3L828.0 467.2L839.0 467.2L839.0 470.1L849.0 470.1L849.0 473.0L858.0 473.0L858.0 475.9L866.0 475.9L866.0 478.8L875.0 478.8L875.0 481.7L883.0 481.7L883.0 484.6L892.0 484.6L892.0 487.5L900.0 487.5L900.0 490.4L910.0 490.4L910.0 493.3L920.0 493.3L920.0 496.2L929.0 496.2L929.0 499.1L939.0 499.1L939.0 502.0L949.0 502.0L949.0 504.9L958.0 504.9L958.0 507.8L967.0 507.8L967.0 510.7L976.0 510.7L976.0 513.6L985.0 513.6L985.0 516.5L994.0 516.5L994.0 519.4L1003.0 519.4L1003.0 522.3L1010.0 522.3L1010.0 525.2L1017.0 525.2L1017.0 528.1L1024.0 528.1L1024.0 531.0L1031.0 531.0L1031.0 533.9L1037.0 533.9L1037.0 536.8L1042.0 537.6L1044.5 539.1L1047.0 540.6L1049.5 541.3L1052.0 542.8L1054.5 544.7L1057.0 546.1L1059.5 546.9L1062.0 548.3L1064.5 549.6L1067.0 550.4L1069.5 551.7L1072.0 553.1L1074.5 555.5L1077.0 556.6L1079.5 558.3L1082.0 558.6L1084.5 560.7L1087.0 561.9L1089.5 563.6L1092.0 564.5L1094.5 566.7L1097.0 566.9L1099.5 569.0L1102.0 570.9L1104.5 572.8L1107.0 574.2L1109.5 575.8L1112.0 577.6L1114.5 579.4L1117.0 580.3L1119.5 582.4L1122.0 584.3L1124.5 585.9L1127.0 587.0L1129.5 589.1L1132.0 590.8L1134.5 592.1L1137.0 593.8L1139.5 595.1L1142.0 596.9L1144.5 598.6L1147.0 599.5L1149.5 601.8L1152.0 603.8L1154.5 605.3L1157.0 606.7L1159.5 607.9L1162.0 609.9L1164.5 611.4L1167.0 612.8L1169.5 614.9L1172.0 615.6L1174.5 618.0L1177.0 618.8L1179.5 621.1L1182.0 622.6L1184.5 623.9L1187.0 626.1L1189.5 627.5L1192.0 629.3L1194.5 631.3L1197.0 632.2L1199.5 633.5L1202.0 635.5L1204.5 637.6L1207.0 638.7L1209.5 640.3L1212.0 642.8L1214.5 644.0L1217.0 645.1L1219.5 647.1L1222.0 647.8L1224.5 649.6L1227.0 650.4L1229.5 652.0L1232.0 653.9L1234.5 655.4L1237.0 656.7L1239.5 657.5L1242.0 659.1L1244.5 660.2L1247.0 661.4L1249.5 663.2L1252.0 664.9L1254.5 666.2L1257.0 667.3L1259.5 668.8L1262.0 669.2L1264.5 670.4L1267.0 671.9L1269.5 673.0L1272.0 674.2L1274.5 675.6L1277.0 677.2" fill="none" stroke="#ff00ff" stroke-width="5" stroke-linejoin="round" stroke-linecap="round" stroke-dasharray="10 10"/>
<path d="M58.5 715.8L97.5 715.8L98.6 715.8L98.6 376.0L100.0 373.0L104.0 377.0L131 379.5L131.5 379.5L134.0 379.7L136.5 380.1L139.0 379.8L141.5 379.9L144.0 380.1L146.5 379.7L149.0 380.1L151.5 380.3L154.0 380.6L156.5 380.0L159.0 380.3L161.5 380.1L164.0 380.9L166.5 380.9L169.0 380.3L171.5 381.4L174.0 381.4L176.5 381.2L179.0 381.2L181.5 380.9L184.0 380.8L186.5 381.4L189.0 381.0L191.5 381.2L194.0 381.3L196.5 381.2L199.0 381.7L201.5 381.7L204.0 382.1L206.5 381.9L209.0 382.0L211.5 382.0L214.0 382.2L216.5 382.0L219.0 381.9L221.5 382.7L224.0 382.7L226.5 382.6L229.0 382.5L231.5 382.2L234.0 382.2L236.5 382.3L239.0 382.1L241.5 382.9L244.0 382.6L246.5 383.1L249.0 382.7L251.5 383.3L254.0 383.2L256.5 382.4L259.0 382.7L261.5 383.4L264.0 383.0L266.5 383.6L269.0 383.0L271.5 382.7L274.0 383.3L276.5 383.5L279.0 383.0L281.5 382.9L284.0 383.2L286.5 383.8L289.0 383.7L291.5 383.1L294.0 383.2L296.5 383.1L299.0 383.1L301.5 383.9L304.0 383.3L306.5 383.7L309.0 383.6L311.5 383.4L314.0 384.0L316.5 383.4L319.0 384.0L321.5 383.5L324.0 383.8L326.5 383.7L329.0 383.8L331.5 384.5L334.0 384.4L336.5 383.9L339.0 384.5L341.5 383.9L344.0 384.1L346.5 384.6L349.0 384.4L351.5 383.9L354.0 384.8L356.5 384.1L359.0 384.2L361.5 384.7L364.0 384.3L366.5 384.3L369.0 384.1L371.5 384.2L374.0 384.7L376.5 384.4L379.0 384.8L381.5 384.6L384.0 384.7L386.5 385.3L389.0 384.8L391.5 385.0L394.0 385.3L396.5 384.6L399.0 384.6L401.5 385.4L404.0 385.4L406.5 384.8L409.0 384.8L411.5 385.4L414.0 385.6L416.5 384.9L419.0 385.7L421.5 385.6L424.0 385.4L426.5 385.2L429.0 384.9L431.5 384.9L434.0 385.9L436.5 385.2L439.0 385.7L441.5 385.2L444.0 385.8L446.5 385.6L449.0 385.4L451.5 385.3L454.0 385.9L456.5 385.2L459.0 385.4L461.5 385.8L464.0 386.1L466.5 385.9L469.0 385.6L471.5 386.3L474.0 385.6L476.5 385.4L479.0 385.7L481.5 385.9L484.0 385.5L486.0 386.0L493.0 386.0L493.0 388.9L495.0 388.9L495.0 391.8L499.0 391.8L499.0 394.7L507.0 394.7L507.0 397.6L526.0 397.6L526.0 400.5L540.0 400.5L540.0 403.4L557.0 403.4L557.0 406.3L573.0 406.3L573.0 409.2L588.0 409.2L588.0 412.1L601.0 412.1L601.0 415.0L615.0 415.0L615.0 417.9L628.0 417.9L628.0 420.8L642.0 420.8L642.0 423.7L655.0 423.7L655.0 426.6L669.0 426.6L669.0 429.5L682.0 429.5L682.0 432.4L696.0 432.4L696.0 435.3L710.0 435.3L710.0 438.2L723.0 438.2L723.0 441.1L736.0 441.1L736.0 444.0L748.0 444.0L748.0 446.9L761.0 446.9L761.0 449.8L774.0 449.8L774.0 452.7L787.0 452.7L787.0 455.6L798.0 455.6L798.0 458.5L808.0 458.5L808.0 461.4L818.0 461.4L818.0 464.3L828.0 464.3L828.0 467.2L839.0 467.2L839.0 470.1L849.0 470.1L849.0 473.0L858.0 473.0L858.0 475.9L866.0 475.9L866.0 478.8L875.0 478.8L875.0 481.7L883.0 481.7L883.0 484.6L892.0 484.6L892.0 487.5L900.0 487.5L900.0 490.4L910.0 490.4L910.0 493.3L920.0 493.3L920.0 496.2L929.0 496.2L929.0 499.1L939.0 499.1L939.0 502.0L949.0 502.0L949.0 504.9L958.0 504.9L958.0 507.8L967.0 507.8L967.0 510.7L976.0 510.7L976.0 513.6L985.0 513.6L985.0 516.5L994.0 516.5L994.0 519.4L1003.0 519.4L1003.0 522.3L1010.0 522.3L1010.0 525.2L1017.0 525.2L1017.0 528.1L1024.0 528.1L1024.0 531.0L1031.0 531.0L1031.0 533.9L1037.0 533.9L1037.0 536.8L1042.0 537.6L1044.5 539.1L1047.0 540.6L1049.5 541.3L1052.0 542.8L1054.5 544.7L1057.0 546.1L1059.5 546.9L1062.0 548.3L1064.5 549.6L1067.0 550.4L1069.5 551.7L1072.0 553.1L1074.5 555.5L1077.0 556.6L1079.5 558.3L1082.0 558.6L1084.5 560.7L1087.0 561.9L1089.5 563.6L1092.0 564.5L1094.5 566.7L1097.0 566.9L1099.5 569.0L1102.0 570.9L1104.5 572.8L1107.0 574.2L1109.5 575.8L1112.0 577.6L1114.5 579.4L1117.0 580.3L1119.5 582.4L1122.0 584.3L1124.5 585.9L1127.0 587.0L1129.5 589.1L1132.0 590.8L1134.5 592.1L1137.0 593.8L1139.5 595.1L1142.0 596.9L1144.5 598.6L1147.0 599.5L1149.5 601.8L1152.0 603.8L1154.5 605.3L1157.0 606.7L1159.5 607.9L1162.0 609.9L1164.5 611.4L1167.0 612.8L1169.5 614.9L1172.0 615.6L1174.5 618.0L1177.0 618.8L1179.5 621.1L1182.0 622.6L1184.5 623.9L1187.0 626.1L1189.5 627.5L1192.0 629.3L1194.5 631.3L1197.0 632.2L1199.5 633.5L1202.0 635.5L1204.5 637.6L1207.0 638.7L1209.5 640.3L1212.0 642.8L1214.5 644.0L1217.0 645.1L1219.5 647.1L1222.0 647.8L1224.5 649.6L1227.0 650.4L1229.5 652.0L1232.0 653.9L1234.5 655.4L1237.0 656.7L1239.5 657.5L1242.0 659.1L1244.5 660.2L1247.0 661.4L1249.5 663.2L1252.0 664.9L1254.5 666.2L1257.0 667.3L1259.5 668.8L1262.0 669.2L1264.5 670.4L1267.0 671.9L1269.5 673.0L1272.0 674.2L1274.5 675.6L1277.0 677.2" fill="none" stroke="#ffffff" stroke-width="1.5" stroke-linejoin="round" stroke-linecap="round" stroke-dasharray="10 10"/>
<rect x="507.8" y="392.1" width="5.5" height="8.1" rx="2" fill="#ff00ff"/>
<rect x="537.6" y="397.9" width="3.6" height="8.1" rx="2" fill="#ff00ff"/>
<rect x="571.9" y="403.7" width="8.7" height="8.1" rx="2" fill="#ff00ff"/>
<rect x="581.6" y="406.6" width="9.3" height="8.1" rx="2" fill="#ff00ff"/>
<rect x="596.5" y="409.5" width="6.6" height="8.1" rx="2" fill="#ff00ff"/>
<rect x="625.3" y="415.3" width="4.1" height="8.1" rx="2" fill="#ff00ff"/>
<rect x="641.5" y="418.2" width="6.6" height="8.1" rx="2" fill="#ff00ff"/>
<rect x="657.4" y="421.1" width="9.5" height="8.1" rx="2" fill="#ff00ff"/>
<rect x="668.0" y="424.0" width="4.6" height="8.1" rx="2" fill="#ff00ff"/>
<rect x="681.3" y="426.9" width="3.1" height="8.1" rx="2" fill="#ff00ff"/>
<rect x="708.2" y="432.7" width="5.2" height="8.1" rx="2" fill="#ff00ff"/>
<rect x="722.4" y="435.6" width="7.2" height="8.1" rx="2" fill="#ff00ff"/>
<rect x="749.9" y="441.4" width="9.3" height="8.1" rx="2" fill="#ff00ff"/>
<rect x="761.2" y="444.3" width="10.5" height="8.1" rx="2" fill="#ff00ff"/>
<rect x="773.5" y="447.2" width="6.6" height="8.1" rx="2" fill="#ff00ff"/>
<rect x="799.4" y="453.0" width="7.6" height="8.1" rx="2" fill="#ff00ff"/>
<rect x="823.9" y="461.7" width="8.2" height="8.1" rx="2" fill="#ff00ff"/>
<rect x="853.7" y="470.4" width="8.7" height="8.1" rx="2" fill="#ff00ff"/>
<rect x="888.5" y="482.0" width="9.3" height="8.1" rx="2" fill="#ff00ff"/>
<rect x="919.1" y="490.7" width="3.7" height="8.1" rx="2" fill="#ff00ff"/>
<rect x="927.1" y="493.6" width="9.1" height="8.1" rx="2" fill="#ff00ff"/>
<rect x="933.0" y="496.5" width="9.5" height="8.1" rx="2" fill="#ff00ff"/>
<rect x="958.5" y="502.3" width="5.7" height="8.1" rx="2" fill="#ff00ff"/>
<rect x="966.2" y="505.2" width="4.2" height="8.1" rx="2" fill="#ff00ff"/>
<rect x="991.8" y="513.9" width="10.6" height="8.1" rx="2" fill="#ff00ff"/>
<path d="M107.3 378.5L110.3 378.8L113.3 379.6L116.3 379.0L119.3 380.0L122.3 379.8L125.3 379.6L128.3 380.3" fill="none" stroke="#ff00ff" stroke-width="7.6" stroke-linejoin="round" stroke-linecap="round" />
<path d="M189.4 381.6L192.4 381.0L195.4 381.2L198.4 382.3L201.4 382.5L204.4 380.8L207.4 382.3L210.4 382.6L213.4 381.6L216.4 381.7L219.4 380.8L222.4 381.6L225.4 381.5L228.4 381.8L231.4 380.4L234.4 382.6L237.4 381.5L240.4 381.3L243.4 382.2L246.4 381.7L249.4 381.5L252.4 382.0" fill="none" stroke="#ff00ff" stroke-width="7.6" stroke-linejoin="round" stroke-linecap="round" />
<path d="M394.4 384.6L397.4 385.7L400.4 385.4L403.4 386.7L406.4 386.6L409.4 385.0L412.4 385.5L415.4 384.7L418.4 385.4L421.4 386.4L424.4 386.6L427.4 385.5L430.4 385.2L433.4 384.9L436.4 385.9L439.4 386.6L442.4 384.7L445.4 386.3L448.4 384.5L451.4 384.9L454.4 384.9L457.4 386.0L460.4 385.2L463.4 385.3L466.4 385.9L469.4 384.7L472.4 386.2L475.4 384.7L478.4 385.6L481.4 385.0" fill="none" stroke="#ff00ff" stroke-width="7.6" stroke-linejoin="round" stroke-linecap="round" />
<path d="M59.2 490.7L59.2 540.0L62.8 544.5L70.0 542.0L72.0 548.0L80.0 556.5L83.0 550.0L86.5 541.0L90.0 535.0L93.0 532.0L94.0 520.0L97.0 514.0L99.8 510.0L101.0 522.0L110.0 535.0L118.0 542.0L127.0 538.0L129.5 525.0L136.0 524.0L137.0 521.0L141.0 526.0L142.5 531.0L145.5 532.0L150.0 529.0L153.0 529.0L155.0 533.0L161.0 533.0L163.0 530.0L167.0 534.0L170.0 538.0L172.0 531.0L175.0 531.0L177.4 531.0L178.7 530.2L181.2 530.2L182.5 531.0L184.9 531.0L186.2 530.9L188.3 530.9L189.4 531.7L191.5 531.7L192.7 532.5L194.8 532.5L195.9 533.6L198.0 533.6L199.2 534.9L201.3 534.9L202.4 535.8L204.5 535.8L205.6 534.4L207.7 534.4L208.9 534.0L211.0 534.0L212.1 534.2L214.2 534.2L215.3 536.1L217.5 536.1L218.6 537.4L220.7 537.4L221.8 538.7L223.9 538.7L225.1 539.4L227.2 539.4L228.3 541.3L230.4 541.3L231.6 541.6L233.7 541.6L234.8 542.3L236.9 542.3L238.0 541.9L240.1 541.9L241.3 538.9L243.4 538.9L244.5 538.2L246.6 538.2L247.8 540.5L249.9 540.5L251.0 541.5L253.1 541.5L254.2 540.4L256.3 540.4L257.5 538.7L259.6 538.7L260.7 535.8L262.8 535.8L263.9 535.3L266.0 535.3L267.2 535.3L269.3 535.3L270.4 535.8L272.5 535.8L273.7 538.5L275.8 538.5L276.9 538.3L279.1 538.3L280.2 540.6L282.3 540.6L283.4 541.3L285.5 541.3L286.6 540.4L288.7 540.4L289.9 537.8L292.0 537.8L293.1 538.2L295.2 538.2L296.4 539.6L298.5 539.6L299.6 542.3L301.7 542.3L302.8 542.5L304.9 542.5L306.1 541.0L308.2 541.0L309.3 540.2L311.4 540.2L312.6 541.8L314.7 541.8L315.8 540.6L317.9 540.6L319.0 541.5L321.1 541.5L322.3 543.6L324.4 543.6L325.5 543.9L327.6 543.9L328.8 541.7L330.9 541.7L332.0 541.5L334.1 541.5L335.2 541.5L337.3 541.5L338.5 542.5L340.6 542.5L341.7 542.3L343.8 542.3L344.9 541.8L347.1 541.8L348.2 543.9L350.3 543.9L351.4 543.7L353.5 543.7L354.7 545.4L356.8 545.4L357.9 545.5L360.0 545.5L361.1 545.4L363.3 545.4L364.4 543.1L366.5 543.1L367.6 543.7L369.8 543.7L370.9 540.9L373.0 540.9L374.1 541.2L376.3 541.2L377.4 540.6L379.9 540.6L381.2 543.2L383.7 543.2L385.0 544.4L388.2 544.4L389.9 542.0L393.0 542.0L394.7 544.4L396.8 544.4L397.9 543.2L400.1 543.2L401.2 542.0L403.3 542.0L404.4 545.2L408.5 535.5L411.1 535.5L412.5 531.4L414.6 531.4L415.8 535.5L417.9 535.5L419.0 538.7L421.6 538.7L423.1 538.7L425.7 538.7L427.1 540.4L430.3 540.4L432.0 543.6L434.1 543.6L435.2 541.7L437.4 541.7L438.5 542.0L440.6 542.0L441.8 543.0L443.9 543.0L445.0 546.0L448.1 546.0L449.8 544.4L452.4 544.4L453.9 546.0L456.5 546.0L457.9 550.1L460.0 550.1L461.1 546.0L464.3 546.0L466.0 546.8L468.4 538.7L470.8 538.7L472.0 539.2L474.4 539.2L475.7 539.5L477.8 539.5L478.9 543.2L481.1 543.2L482.2 546.8L484.3 546.8L485.4 547.2L487.5 547.2L488.7 546.4L490.8 546.4L491.9 547.6L495.1 547.6L496.8 553.3L498.9 553.3L500.1 550.1L502.2 550.1L503.3 548.5L507.3 560.6L508.5 550.1L510.9 550.1L512.2 549.6L514.6 549.6L515.8 551.5L518.2 551.5L519.5 550.9L521.6 550.9L522.7 548.5L524.8 548.5L525.9 543.6L528.0 543.6L529.1 541.5L531.3 541.5L532.4 537.1L534.0 503.9L536.1 503.9L537.2 506.5L539.4 506.5L540.5 511.2L543.7 511.2L545.4 512.8L548.0 512.8L549.5 514.9L552.1 514.9L553.5 519.3L556.6 519.3L558.3 519.3L561.5 519.3L563.2 525.8L566.3 525.8L568.0 520.9L576.2 530.6L579.3 530.6L581.0 524.2L584.1 524.2L585.7 530.0L588.1 529.2L590.5 538.9L592.1 522.7L594.2 522.7L595.4 524.3L599.4 538.9L602.7 530.8L605.8 530.8L607.5 530.8L609.2 535.6L611.3 535.6L612.4 532.4L614.5 532.4L615.6 530.0L617.7 530.0L618.9 530.3L621.0 530.3L622.1 528.3L624.2 528.3L625.4 529.5L627.5 529.5L628.6 530.8L630.2 534.8L632.3 534.8L633.5 528.3L636.1 528.3L637.5 527.0L640.2 527.0L641.6 524.3L644.0 531.6L644.8 525.1L647.2 525.1L648.6 523.8L651.0 523.8L652.3 523.4L654.8 523.4L656.1 522.7L658.2 522.7L659.4 526.4L661.5 526.4L662.6 530.0L665.2 530.0L666.7 528.6L669.3 528.6L670.7 527.5L673.1 530.0L674.7 530.0L675.6 525.9L678.2 525.9L679.7 527.8L682.3 527.8L683.7 529.2L686.3 529.2L687.8 529.1L690.4 529.1L691.8 531.6L694.9 531.6L696.6 534.0L698.7 534.0L699.9 533.2L702.0 533.2L703.1 537.3L704.7 527.5L709.6 538.9L711.2 530.0L713.3 530.0L714.5 537.3L716.1 529.2L718.7 529.2L720.2 529.3L722.8 529.3L724.2 528.3L732.3 539.7L735.5 530.0L737.6 530.0L738.8 530.9L740.9 530.9L742.0 530.0L744.1 530.0L745.2 531.6L747.3 531.6L748.5 530.6L750.6 530.6L751.7 531.1L753.8 531.1L755.0 531.6L757.1 531.6L758.2 530.8L761.4 542.1L763.5 542.1L764.6 541.3L766.8 541.3L767.9 540.1L770.0 540.1L771.1 539.4L773.3 539.4L774.4 539.7L777.0 539.7L778.4 544.5L782.1 544.5L784.1 538.9L786.2 538.9L787.4 538.9L789.5 538.9L790.6 538.9L793.5 538.9L795.0 546.2L796.6 534.0L798.7 534.0L799.9 533.5L802.0 533.5L803.1 535.6L806.3 535.6L808.0 530.0L811.1 530.0L812.8 536.4L816.0 536.4L817.7 529.2L820.1 521.1L822.5 521.1L823.8 524.1L826.1 524.1L827.4 525.1L830.6 525.1L832.3 524.3L834.4 524.3L835.5 527.5L837.6 527.5L838.7 529.2L843.6 538.9L846.0 542.9L848.5 530.8L852.1 530.8L854.1 533.2L857.4 542.9L859.0 530.8L861.4 540.5L863.0 530.8L866.2 530.8L867.9 525.1L870.0 525.1L871.1 532.4L874.3 532.4L876.0 534.0L879.2 534.0L880.9 530.8L883.0 530.8L884.1 532.1L886.2 532.1L887.3 532.4L890.5 532.4L892.2 534.8L895.4 534.8L897.1 531.6L900.3 546.2L903.5 531.6L905.6 531.6L906.8 533.3L908.9 533.3L910.0 533.2L912.1 533.2L913.2 531.1L915.4 531.1L916.5 528.3L918.6 528.3L919.8 529.7L921.9 529.7L923.0 531.6L925.1 531.6L926.2 531.1L928.4 531.1L929.5 530.0L932.6 530.0L934.3 535.6L938.0 535.6L940.0 538.9L941.6 526.7L944.0 526.7L945.2 525.9L947.6 525.9L948.9 525.1L951.0 525.1L952.1 529.6L954.3 529.6L955.4 531.6L958.5 531.6L960.2 525.1L962.8 525.1L964.2 526.7L966.9 526.7L968.3 526.7L971.5 526.7L973.2 524.3L976.4 524.3L978.1 526.7L979.7 533.2L981.8 533.2L982.9 527.5L985.0 527.5L986.2 531.6L991.0 523.5L993.1 523.5L994.2 524.1L996.4 524.1L997.5 525.9L999.6 525.9L1000.8 528.2L1002.9 528.2L1004.0 528.3L1006.1 528.3L1007.2 528.1L1009.4 528.1L1010.5 526.7L1013.0 526.7L1014.3 528.5L1016.8 528.5L1018.1 529.6L1020.6 529.6L1021.9 529.8L1024.9 539.7L1025.9 526.8L1028.5 526.8L1029.9 525.6L1032.5 525.6L1033.9 524.8L1036.5 524.8L1037.8 527.3L1040.4 527.3L1041.8 527.8L1044.0 527.8L1045.1 530.1L1047.3 530.1L1048.5 531.0L1050.6 531.0L1051.8 531.8L1054.4 531.8L1055.8 532.0L1058.3 532.0L1059.7 530.8L1062.3 530.8L1063.7 530.0L1066.3 530.0L1067.7 527.8L1070.3 527.8L1071.7 528.6L1074.2 528.6L1075.6 529.8L1078.2 529.8L1079.6 528.4L1082.2 528.4L1083.6 525.8L1093.5 536.7L1096.1 536.7L1097.5 530.8L1100.1 530.8L1101.5 527.2L1104.0 527.2L1105.4 525.8L1107.6 525.8L1108.7 524.7L1110.9 524.7L1112.1 524.4L1114.2 524.4L1115.4 523.8L1119.2 523.8L1121.3 524.8L1123.9 524.8L1125.3 521.5L1127.9 521.5L1129.3 520.8L1131.9 520.8L1133.2 523.4L1135.8 523.4L1137.2 526.8L1139.4 526.8L1140.5 524.9L1142.7 524.9L1143.9 522.5L1146.0 522.5L1147.2 519.9L1151.0 519.9L1153.1 527.8L1155.7 527.8L1157.1 525.6L1159.7 525.6L1161.1 524.8L1163.7 524.8L1165.0 527.5L1167.6 527.5L1169.0 527.8L1171.2 527.8L1172.3 529.2L1174.5 529.2L1175.7 529.4L1177.8 529.4L1179.0 530.8L1181.1 530.8L1182.3 531.5L1184.4 531.5L1185.6 531.6L1187.7 531.6L1188.9 531.8L1191.5 531.8L1192.9 535.8L1195.0 535.8L1196.2 536.5L1198.3 536.5L1199.5 536.8L1201.6 536.8L1202.8 537.7L1204.8 537.7L1205.8 537.0L1207.8 537.0L1208.8 533.8L1210.9 533.8L1212.1 533.5L1214.2 533.5L1215.4 533.0L1217.5 533.0L1218.7 531.8L1221.3 531.8L1222.7 531.8L1224.7 510.9L1227.3 510.9L1228.7 505.9L1234.6 517.9L1242.6 529.8L1245.2 529.8L1246.6 533.0L1249.2 533.0L1250.6 534.8L1253.2 534.8L1254.6 536.7L1257.1 536.7L1258.5 534.8L1261.1 534.8L1262.5 536.7L1266.5 518.9L1268.5 525.8L1271.0 525.8L1272.4 524.8L1277.0 515.0" fill="none" stroke="#c000c0" stroke-width="2.2" stroke-linejoin="round" stroke-linecap="round" />
<path d="M58.5 717.0L96.5 717.0L97.5 717.0L97.5 625.0L100.0 618.0L101.0 616.8L102.5 614.9L104.0 612.0L105.5 610.4L107.0 608.4L108.5 607.3L110.0 606.3L111.5 605.2L113.0 604.9L114.5 605.5L116.0 604.3L117.5 603.7L119.0 604.3L120.5 603.6L122.0 604.4L123.5 603.7L125.0 604.1L126.5 602.7L128.0 603.7L129.5 604.0L131.0 602.7L132.5 604.3L134.0 602.9L135.5 603.4L137.0 602.9L138.5 603.5L140.0 603.7L141.5 602.7L143.0 604.3L144.5 603.4L146.0 603.5L147.5 603.7L149.0 603.3L150.5 603.1L152.0 603.8L153.5 603.6L155.0 603.1L156.5 603.9L158.0 603.1L159.5 602.6L161.0 603.0L162.5 602.7L164.0 602.9L165.5 604.0L167.0 603.3L168.5 604.2L170.0 603.9L171.5 602.7L173.0 604.4L174.5 604.3L176.0 602.7L177.5 604.2L179.0 603.4L180.5 603.5L182.0 604.4L183.5 603.0L185.0 603.5L186.5 604.3L188.0 603.9L189.5 603.4L191.0 604.4L192.5 604.1L194.0 603.7L195.5 602.8L197.0 603.7L198.5 603.4L200.0 603.0L201.5 602.7L203.0 603.6L204.5 602.8L206.0 603.4L207.5 603.8L209.0 603.5L210.5 603.1L212.0 603.7L213.5 603.4L215.0 604.1L216.5 603.6L218.0 604.5L219.5 604.4L221.0 604.0L222.5 603.1L224.0 602.9L225.5 604.3L227.0 604.1L228.5 603.9L230.0 603.4L231.5 603.2L233.0 604.0L234.5 603.8L236.0 603.8L237.5 603.9L239.0 604.2L240.5 603.1L242.0 603.3L243.5 604.6L245.0 604.5L246.5 604.4L248.0 602.9L249.5 603.0L251.0 603.3L252.5 603.6L254.0 604.0L255.5 603.1L257.0 603.9L258.5 603.0L260.0 603.1L261.5 604.1L263.0 603.9L264.5 604.1L266.0 603.6L267.5 603.8L269.0 603.3L270.5 603.6L272.0 604.3L273.5 604.5L275.0 603.1L276.5 603.2L278.0 604.4L279.5 604.1L281.0 604.4L282.5 603.4L284.0 603.8L285.5 603.5L287.0 604.5L288.5 603.7L290.0 604.2L291.5 604.8L293.0 603.7L294.5 604.1L296.0 604.4L297.5 604.7L299.0 603.9L300.5 603.8L302.0 603.3L303.5 604.7L305.0 603.2L306.5 603.2L308.0 604.1L309.5 604.0L311.0 604.3L312.5 603.6L314.0 604.5L315.5 603.2L317.0 603.5L318.5 604.3L320.0 603.2L321.5 603.6L323.0 604.4L324.5 604.3L326.0 603.6L327.5 603.4L329.0 603.7L330.5 604.4L332.0 603.8L333.5 603.3L335.0 604.4L336.5 604.1L338.0 604.8L339.5 604.8L341.0 604.7L342.5 603.9L344.0 604.5L345.5 603.6L347.0 603.7L348.5 603.8L350.0 604.8L351.5 604.7L353.0 603.5L354.5 603.8L356.0 603.8L357.5 603.8L359.0 603.8L360.5 603.8L362.0 603.5L363.5 604.1L365.0 604.5L366.5 604.1L368.0 604.6L369.5 604.1L371.0 603.4L372.5 604.5L374.0 604.7L375.5 603.6L377.0 603.1L378.5 604.0L380.0 604.1L381.5 604.1L383.0 604.8L384.5 604.3L386.0 604.5L387.5 603.2L389.0 604.1L390.5 604.5L392.0 603.3L393.5 603.2L395.0 604.4L396.5 604.7L398.0 603.3L399.5 604.2L401.0 603.4L402.5 604.4L404.0 604.3L405.5 603.5L407.0 603.5L408.5 604.5L410.0 604.0L411.5 604.5L413.0 603.8L414.5 603.7L416.0 604.8L417.5 604.3L419.0 604.0L420.5 604.1L422.0 604.4L423.5 604.4L425.0 604.7L426.5 603.8L428.0 604.6L429.5 604.3L431.0 604.6L432.5 604.6L434.0 604.6L435.5 604.7L437.0 604.8L438.5 604.3L440.0 604.0L441.5 604.4L443.0 604.5L444.5 603.9L446.0 603.9L447.5 603.4L449.0 604.4L450.5 604.9L452.0 603.8L453.5 603.4L455.0 603.5L456.5 603.9L458.0 603.6L459.5 604.8L461.0 603.2L462.5 603.7L464.0 603.3L465.5 604.3L467.0 604.5L468.5 603.4L470.0 603.2L471.5 603.9L473.0 604.2L474.5 604.7L476.0 603.2L477.5 603.3L479.0 603.4L480.5 603.3L482.0 602.9L483.5 603.3L485.0 602.7L486.5 601.6L488.0 601.0L489.5 600.8L491.0 600.1L492.5 600.7L494.0 599.5L495.5 599.4L497.0 599.5L498.5 598.4L500.0 597.6L501.5 598.7L503.0 598.8L504.5 597.8L506.0 598.2L507.5 599.0L509.0 598.2L510.5 597.8L512.0 597.5L513.5 599.2L515.0 598.9L516.5 598.2L518.0 598.5L519.5 598.8L521.0 599.3L522.5 601.4L524.0 601.7L525.5 601.5L527.0 601.2L528.5 602.0L530.0 601.9L531.5 602.7L533.0 602.5L534.5 602.4L536.0 601.6L537.5 601.6L539.0 602.0L540.5 601.9L542.0 603.0L543.5 602.4L545.0 602.6L546.5 603.3L548.0 602.0L549.5 602.6L551.0 601.9L552.5 603.0L554.0 601.7L555.5 603.2L557.0 603.3L558.5 603.2L560.0 601.9L561.5 602.3L563.0 603.1L564.5 602.1L566.0 602.8L567.5 602.8L569.0 603.7L570.5 603.1L572.0 603.6L573.5 602.6L575.0 603.5L576.5 602.9L578.0 603.8L579.5 602.4L581.0 603.7L582.5 602.6L584.0 603.3L585.5 603.3L587.0 602.6L588.5 603.9L590.0 603.0L591.5 603.0L593.0 602.6L594.5 603.0L596.0 603.4L597.5 603.8L599.0 603.2L600.5 603.8L602.0 602.8L603.5 603.3L605.0 603.4L606.5 604.4L608.0 604.1L609.5 603.8L611.0 602.6L612.5 603.3L614.0 603.9L615.5 603.1L617.0 603.7L618.5 603.5L620.0 602.7L621.5 604.4L623.0 604.1L624.5 603.0L626.0 603.8L627.5 603.2L629.0 603.3L630.5 603.6L632.0 603.2L633.5 603.3L635.0 603.4L636.5 603.9L638.0 603.2L639.5 603.1L641.0 604.0L642.5 603.3L644.0 604.4L645.5 603.7L647.0 604.0L648.5 603.3L650.0 604.2L651.5 602.9L653.0 603.0L654.5 602.9L656.0 604.0L657.5 604.0L659.0 603.1L660.5 603.5L662.0 604.3L663.5 603.8L665.0 602.9L666.5 603.2L668.0 603.1L669.5 603.0L671.0 603.5L672.5 602.9L674.0 604.4L675.5 603.6L677.0 603.7L678.5 604.0L680.0 604.2L681.5 604.3L683.0 603.5L684.5 603.4L686.0 603.6L687.5 602.8L689.0 603.5L690.5 604.1L692.0 604.6L693.5 604.3L695.0 604.0L696.5 603.9L698.0 602.9L699.5 603.4L701.0 603.5L702.5 604.0L704.0 603.1L705.5 603.5L707.0 603.8L708.5 604.3L710.0 604.4L711.5 604.0L713.0 603.2L714.5 604.3L716.0 604.5L717.5 603.9L719.0 603.5L720.5 603.8L722.0 603.2L723.5 604.2L725.0 604.7L726.5 603.8L728.0 604.2L729.5 604.4L731.0 603.3L732.5 604.6L734.0 604.1L735.5 603.3L737.0 603.1L738.5 603.4L740.0 604.0L741.5 604.2L743.0 603.6L744.5 604.6L746.0 603.6L747.5 603.8L749.0 603.2L750.5 604.7L752.0 603.2L753.5 604.6L755.0 604.0L756.5 604.0L758.0 604.0L759.5 603.5L761.0 604.6L762.5 604.8L764.0 604.5L765.5 604.1L767.0 603.2L768.5 604.5L770.0 603.5L771.5 604.6L773.0 603.5L774.5 604.1L776.0 604.5L777.5 603.4L779.0 604.0L780.5 603.2L782.0 603.1L783.5 603.4L785.0 604.8L786.5 604.8L788.0 604.3L789.5 603.6L791.0 604.3L792.5 604.4L794.0 603.8L795.5 604.2L797.0 604.5L798.5 603.1L800.0 603.5L801.5 603.9L803.0 603.4L804.5 603.8L806.0 604.2L807.5 603.5L809.0 604.1L810.5 603.6L812.0 604.2L813.5 603.8L815.0 604.3L816.5 603.3L818.0 604.4L819.5 603.5L821.0 604.9L822.5 604.3L824.0 604.1L825.5 604.0L827.0 604.4L828.5 604.5L830.0 604.6L831.5 604.6L833.0 604.1L834.5 605.1L836.0 604.8L837.5 604.8L839.0 604.0L840.5 604.1L842.0 604.3L843.5 604.9L845.0 604.3L846.5 604.3L848.0 604.1L849.5 605.0L851.0 603.9L852.5 603.5L854.0 604.7L855.5 605.0L857.0 604.7L858.5 604.5L860.0 604.8L861.5 604.0L863.0 604.5L864.5 603.5L866.0 603.7L867.5 604.2L869.0 604.3L870.5 604.2L872.0 603.6L873.5 604.7L875.0 604.4L876.5 603.9L878.0 604.0L879.5 604.2L881.0 603.9L882.5 603.6L884.0 605.2L885.5 605.3L887.0 604.7L888.5 605.1L890.0 604.3L891.5 605.0L893.0 604.0L894.5 604.9L896.0 604.6L897.5 605.2L899.0 603.8L900.5 605.0L902.0 603.8L903.5 604.6L905.0 605.3L906.5 603.6L908.0 604.1L909.5 604.2L911.0 604.2L912.5 603.8L914.0 605.3L915.5 605.1L917.0 604.4L918.5 604.3L920.0 604.8L921.5 603.8L923.0 603.8L924.5 605.3L926.0 604.3L927.5 604.6L929.0 605.4L930.5 605.5L932.0 604.6L933.5 604.1L935.0 604.3L936.5 605.4L938.0 605.4L939.5 604.1L941.0 605.3L942.5 604.4L944.0 604.7L945.5 604.1L947.0 605.4L948.5 605.6L950.0 604.2L951.5 605.0L953.0 604.2L954.5 605.5L956.0 604.0L957.5 604.1L959.0 605.2L960.5 604.5L962.0 605.5L963.5 605.5L965.0 605.2L966.5 604.2L968.0 605.2L969.5 605.6L971.0 604.8L972.5 604.1L974.0 604.4L975.5 604.5L977.0 605.3L978.5 604.3L980.0 604.3L981.5 604.4L983.0 605.2L984.5 605.4L986.0 604.7L987.5 605.2L989.0 605.6L990.5 605.1L992.0 604.5L993.5 604.6L995.0 605.7L996.5 605.3L998.0 604.6L999.5 605.2L1001.0 604.3L1002.5 605.9L1004.0 605.0L1005.5 605.2L1007.0 605.3L1008.5 604.4L1010.0 605.5L1011.5 605.0L1013.0 604.9L1014.5 606.0L1016.0 604.7L1017.5 605.1L1019.0 606.0L1020.5 605.2L1022.0 605.3L1023.5 605.8L1025.0 605.2L1026.5 606.5L1028.0 606.7L1029.5 605.0L1031.0 605.9L1032.5 606.4L1034.0 605.8L1035.5 606.8L1037.0 606.1L1038.5 605.6L1040.0 606.3L1041.5 606.5L1043.0 606.0L1044.5 606.6L1046.0 606.9L1047.5 606.5L1049.0 606.5L1050.5 607.1L1052.0 606.9L1053.5 606.6L1055.0 607.5L1056.5 606.1L1058.0 607.2L1059.5 606.2L1061.0 607.0L1062.5 606.4L1064.0 606.8L1065.5 607.5L1067.0 607.5L1068.5 607.6L1070.0 606.6L1071.5 607.1L1073.0 606.7L1074.5 607.4L1076.0 607.3L1077.5 606.5L1079.0 607.5L1080.5 607.8L1082.0 607.6L1083.5 608.2L1085.0 607.0L1086.5 607.0L1088.0 606.8L1089.5 607.7L1091.0 607.6L1092.5 607.7L1094.0 607.4L1095.5 608.4L1097.0 607.1L1098.5 608.7L1100.0 608.1L1101.5 608.2L1103.0 608.7L1104.5 607.8L1106.0 607.7L1107.5 608.0L1109.0 607.6L1110.5 608.2L1112.0 608.8L1113.5 608.7L1115.0 608.3L1116.5 609.0L1118.0 608.2L1119.5 609.6L1121.0 608.5L1122.5 608.7L1124.0 608.6L1125.5 609.6L1127.0 609.9L1128.5 609.9L1130.0 608.7L1131.5 609.4L1133.0 609.4L1134.5 609.2L1136.0 610.6L1137.5 609.1L1139.0 609.9L1140.5 610.5L1142.0 611.0L1143.5 609.5L1145.0 610.2L1146.5 610.8L1148.0 609.6L1149.5 610.0L1151.0 611.3L1152.5 610.0L1154.0 610.5L1155.5 610.4L1157.0 610.7L1158.5 610.2L1160.0 610.2L1161.5 612.0L1163.0 611.6L1164.5 611.6L1166.0 610.8L1167.5 610.9L1169.0 611.5L1170.5 611.1L1172.0 611.5L1173.5 612.5L1175.0 611.5L1176.5 611.5L1178.0 612.8L1179.5 612.2L1181.0 611.2L1182.5 612.0L1184.0 612.5L1185.5 611.5L1187.0 612.1L1188.5 612.8L1190.0 613.2L1191.5 612.7L1193.0 613.3L1194.5 612.7L1196.0 612.6L1197.5 613.5L1199.0 612.7L1200.5 613.5L1202.0 612.6L1203.5 613.0L1205.0 612.8L1206.5 613.5L1208.0 612.9L1209.5 613.1L1211.0 613.2L1212.5 613.8L1214.0 613.6L1215.5 613.9L1217.0 615.0L1218.5 614.6L1220.0 615.0L1221.5 613.9L1223.0 614.3L1224.5 613.9L1226.0 615.1L1227.5 614.6L1229.0 614.5L1230.5 614.2L1232.0 614.6L1233.5 614.8L1235.0 615.1L1236.5 616.2L1238.0 615.9L1239.5 615.2L1241.0 615.5L1242.5 615.2L1244.0 616.7L1245.5 616.0L1247.0 617.7L1248.5 618.5L1250.0 619.7L1251.5 619.0L1253.0 620.5L1254.5 621.5L1256.0 621.7L1257.5 623.9L1259.0 623.7L1260.5 625.2L1262.0 625.5L1263.5 625.4L1265.0 626.8L1266.5 623.2L1268.0 619.6L1269.5 616.5L1271.0 614.9L1272.5 611.9L1274.0 610.5L1275.5 608.8L1277.0 607.1" fill="none" stroke="#31859c" stroke-width="3.4" stroke-linejoin="round" stroke-linecap="round" />
<path d="M58.5 716.0L96.0 716.0L97.0 716.0L100.4 700.0L100.4 587.0L100.4 678.0L102.0 692.0L104.8 702.0L107.4 688.0L110.0 674.0L111.7 653.5L113.5 660.0L116.0 680.0L121.3 674.0L133.5 660.5L140.5 683.0L156.0 662.0L161.3 686.6L166.5 689.0L178.7 674.4L180.5 648.3L181.3 634.4L187.4 629.2L196.0 622.2L201.4 603.0L203.0 610.0L204.9 615.0L206.9 619.1L208.8 622.2L210.8 624.2L212.8 624.9L214.7 624.2L216.7 621.9L218.6 618.2L220.6 612.7L222.5 605.6L224.5 595.0L226.5 604.5L228.4 611.3L230.4 616.9L232.3 621.1L234.3 623.8L236.2 624.7L238.2 623.8L240.2 620.7L242.1 615.5L244.1 608.2L246.0 598.4L248.0 584.0L249.9 597.5L251.8 607.0L253.7 614.4L255.6 620.0L257.5 623.4L259.4 624.6L261.2 623.4L263.1 619.8L265.0 613.8L266.9 605.5L268.8 594.7L270.7 579.0L272.6 595.4L274.5 606.4L276.4 614.6L278.3 620.2L280.2 623.4L282.0 624.4L283.9 623.5L285.8 620.9L287.7 616.9L289.6 611.8L291.5 605.9L293.4 598.0L295.4 606.5L297.3 612.5L299.3 617.4L301.2 621.1L303.2 623.4L305.1 624.2L307.1 623.4L309.1 620.8L311.0 616.4L313.0 610.2L314.9 602.1L316.9 590.0L318.8 601.9L320.7 610.0L322.6 616.2L324.5 620.6L326.4 623.2L328.2 624.1L330.1 623.2L332.0 620.8L333.9 616.9L335.8 611.7L337.7 605.2L339.6 596.0L341.5 605.5L343.4 612.0L345.2 617.2L347.1 620.9L349.0 623.2L350.9 623.9L352.8 623.2L354.7 620.9L356.6 617.2L358.4 612.0L360.3 605.5L362.2 596.0L364.2 604.6L366.1 610.9L368.1 616.1L370.0 620.2L372.0 622.8L373.9 623.8L375.9 622.8L377.9 619.7L379.8 614.3L381.8 606.6L383.7 596.3L385.7 581.0L387.5 597.2L389.2 607.7L391.0 615.2L392.8 620.1L394.6 622.8L396.4 623.6L398.1 622.9L399.9 621.3L401.7 619.1L403.4 616.8L405.2 614.8L407.0 613.0L409.0 615.6L410.9 617.8L412.9 619.9L414.9 621.7L416.9 623.0L418.9 623.4L420.8 622.9L422.8 621.1L424.8 617.8L426.8 613.0L428.7 606.2L430.7 596.0L432.7 604.6L434.8 610.8L436.8 615.9L438.8 619.9L440.9 622.4L442.9 623.3L444.9 622.3L447.0 619.4L449.0 614.5L451.0 607.4L453.1 598.0L455.1 584.0L457.0 597.3L458.9 606.5L460.7 613.6L462.6 618.8L464.5 622.0L466.4 623.1L468.2 622.0L470.1 618.8L472.0 613.6L473.9 606.5L475.7 597.3L477.6 584.0L479.5 596.0L481.4 604.6L483.2 611.4L485.1 616.5L487.0 619.7L488.9 620.8L490.8 619.6L492.7 616.2L494.6 610.4L496.4 602.3L498.3 591.6L500.2 576.0L502.1 588.5L504.0 597.2L506.0 604.0L507.9 609.1L509.8 612.2L511.8 613.2L513.7 612.2L515.6 609.0L517.5 603.7L519.4 596.3L521.4 586.8L523.3 573.0L525.1 584.1L526.9 591.8L528.8 597.8L530.6 602.2L532.4 604.9L534.2 605.8L536.1 604.9L537.9 602.2L539.7 597.7L541.6 591.5L543.4 583.5L545.2 572.0L547.0 585.7L548.8 595.1L550.7 602.4L552.5 607.7L554.3 610.9L556.1 611.9L557.9 610.9L559.7 607.7L561.5 602.6L563.4 595.6L565.2 586.8L567.0 574.0L568.8 587.1L570.5 596.0L572.2 602.9L574.0 607.8L575.8 610.7L577.5 611.6L579.2 610.7L581.0 608.0L582.8 603.6L584.5 597.7L586.2 590.4L588.0 580.0L589.9 590.2L591.8 597.4L593.8 603.3L595.7 607.7L597.6 610.4L599.5 611.3L601.4 610.4L603.3 607.4L605.2 602.3L607.2 595.2L609.1 585.8L611.0 572.0L612.8 585.0L614.5 594.1L616.2 601.4L618.0 606.7L619.8 609.9L621.5 611.1L623.2 609.9L625.0 606.5L626.8 600.9L628.5 593.0L630.2 582.8L632.0 568.0L633.9 582.3L635.8 592.3L637.8 600.2L639.7 606.0L641.6 609.5L643.5 610.8L645.4 609.5L647.3 605.8L649.2 599.7L651.2 591.1L653.1 580.1L655.0 564.0L656.8 579.6L658.7 590.5L660.5 599.1L662.3 605.3L664.2 609.2L666.0 610.5L667.8 609.2L669.7 605.3L671.5 598.8L673.3 590.0L675.2 578.5L677.0 562.0L678.9 579.2L680.8 590.8L682.8 599.5L684.7 605.5L686.6 609.0L688.5 610.2L690.4 609.1L692.3 606.1L694.2 601.4L696.2 595.3L698.1 588.0L700.0 578.0L701.7 588.7L703.3 596.0L705.0 601.7L706.7 605.8L708.3 608.3L710.0 609.2L711.7 608.3L713.3 605.9L715.0 602.0L716.7 596.6L718.3 589.8L720.0 580.0L721.9 588.9L723.8 595.2L725.8 600.3L727.7 604.1L729.6 606.5L731.5 607.3L733.4 606.5L735.3 603.9L737.2 599.5L739.2 593.2L741.1 585.0L743.0 573.0L744.8 583.7L746.7 591.3L748.5 597.3L750.3 601.7L752.2 604.5L754.0 605.5L755.8 604.5L757.7 601.6L759.5 596.7L761.3 589.9L763.2 581.0L765.0 568.0L766.8 580.1L768.7 588.5L770.5 595.0L772.3 599.8L774.2 602.6L776.0 603.6L777.8 602.6L779.7 599.8L781.5 595.2L783.3 588.8L785.2 580.7L787.0 569.0L788.7 579.6L790.4 587.2L792.1 593.2L793.8 597.8L795.5 600.6L797.2 601.6L798.9 600.6L800.6 597.5L802.3 592.3L804.0 584.9L805.7 575.2L807.4 561.0L809.4 573.8L811.4 582.6L813.4 589.5L815.4 594.5L817.4 597.5L819.3 598.5L821.3 597.5L823.3 594.5L825.3 589.6L827.3 582.9L829.3 574.3L831.3 562.0L833.1 576.0L835.0 585.6L836.8 593.0L838.6 598.3L840.5 601.5L842.3 602.6L844.1 601.5L846.0 598.4L847.8 593.5L849.6 586.7L851.5 578.2L853.3 566.0L855.2 577.4L857.1 585.3L859.0 591.5L861.0 596.1L862.9 598.9L864.8 599.8L866.7 598.9L868.6 596.0L870.5 591.3L872.5 584.7L874.4 576.3L876.3 564.0L878.0 578.1L879.7 587.8L881.4 595.5L883.1 601.0L884.8 604.4L886.5 605.5L888.1 604.4L889.8 601.0L891.5 595.5L893.2 587.8L894.9 578.1L896.6 564.0L898.7 581.5L900.7 593.5L902.8 602.8L904.9 609.4L906.9 613.4L909.0 614.7L911.1 613.4L913.1 609.6L915.2 603.4L917.3 594.9L919.3 584.2L921.4 569.0L923.3 581.7L925.2 590.4L927.1 597.0L929.1 601.6L931.0 604.4L932.9 605.3L934.8 604.4L936.7 601.9L938.6 597.9L940.6 592.7L942.5 586.2L944.4 577.0L946.2 586.9L947.9 594.0L949.7 599.9L951.5 604.4L953.2 607.3L955.0 608.4L956.8 607.3L958.5 603.9L960.3 598.2L962.1 590.0L963.8 579.2L965.6 563.0L967.5 575.4L969.4 584.0L971.4 590.6L973.3 595.4L975.2 598.3L977.1 599.2L979.0 598.3L980.9 595.4L982.9 590.8L984.8 584.5L986.7 576.5L988.6 565.0L990.2 573.7L991.8 579.8L993.5 584.6L995.1 588.1L996.7 590.3L998.3 591.0L999.9 590.2L1001.5 588.0L1003.1 584.3L1004.8 579.2L1006.4 572.6L1008.0 563.0L1009.8 571.7L1011.7 577.7L1013.5 582.4L1015.3 585.8L1017.2 587.9L1019.0 588.6L1020.8 587.9L1022.7 585.8L1024.5 582.4L1026.3 577.7L1028.2 571.7L1030.0 563.0L1031.9 572.2L1033.8 578.6L1035.7 583.7L1037.5 587.5L1039.4 589.8L1041.3 590.6L1043.2 589.8L1045.1 587.3L1046.9 583.3L1048.8 577.8L1050.7 570.5L1052.6 560.0L1054.4 571.2L1056.2 579.1L1058.0 585.2L1059.8 589.7L1061.6 592.4L1063.4 593.3L1065.2 592.4L1067.0 589.6L1068.8 585.1L1070.6 578.8L1072.4 570.7L1074.2 559.0L1076.1 571.1L1078.0 579.4L1079.9 585.9L1081.8 590.7L1083.7 593.6L1085.6 594.6L1087.4 593.6L1089.3 590.7L1091.2 585.9L1093.1 579.4L1095.0 571.1L1096.9 559.0L1098.7 570.4L1100.5 578.2L1102.3 584.3L1104.1 588.7L1105.9 591.4L1107.8 592.2L1109.6 591.4L1111.4 588.8L1113.2 584.6L1115.0 578.8L1116.8 571.5L1118.6 561.0L1120.6 573.2L1122.5 581.4L1124.5 587.6L1126.5 591.9L1128.5 594.4L1130.4 595.2L1132.4 594.5L1134.4 592.3L1136.4 588.9L1138.3 584.6L1140.3 579.3L1142.3 572.0L1144.3 580.7L1146.2 586.7L1148.2 591.4L1150.2 594.8L1152.2 596.9L1154.2 597.6L1156.1 596.9L1158.1 594.8L1160.1 591.4L1162.0 586.7L1164.0 580.7L1166.0 572.0L1168.0 582.4L1170.0 589.5L1171.9 595.0L1173.9 598.9L1175.9 601.3L1177.8 602.1L1179.8 601.3L1181.8 599.0L1183.8 595.3L1185.8 590.3L1187.7 584.0L1189.7 575.0L1191.6 586.2L1193.5 593.9L1195.4 599.8L1197.3 604.1L1199.2 606.7L1201.1 607.5L1202.9 606.7L1204.8 604.2L1206.7 600.2L1208.6 594.8L1210.5 587.9L1212.4 578.0L1214.3 590.1L1216.2 598.4L1218.1 605.0L1219.9 609.8L1221.8 612.7L1223.7 613.7L1225.6 612.7L1227.5 609.8L1229.3 604.9L1231.2 598.2L1233.1 589.5L1235.0 577.0L1240.0 600.0L1244.0 617.0L1247.0 612.0L1250.0 583.0L1254.0 600.0L1258.0 610.0L1262.0 616.0L1266.0 600.0L1270.0 585.0L1274.0 595.0L1277.0 600.0" fill="none" stroke="#595959" stroke-width="3.0" stroke-linejoin="round" stroke-linecap="round" stroke-dasharray="0 5.3"/>
<path d="M58.5 627.5L96.0 622.0L111.5 617.0L112.0 629.2L116.0 631.0L133.0 625.7L133.5 631.8L156.0 628.3L156.5 640.5L178.0 635.3L178.5 642.2L201.0 637.9L201.4 641.9L209.2 641.8L217.4 640.2L224.3 637.5L224.9 643.0L232.7 642.7L240.9 640.6L247.8 637.2L248.4 642.2L255.9 642.3L263.9 639.8L270.5 636.3L271.1 642.6L278.6 642.9L286.6 640.0L293.2 636.2L293.8 642.4L301.6 642.3L309.8 639.7L316.7 635.7L317.3 642.5L324.8 642.2L332.8 639.5L339.4 635.0L340.0 643.3L347.5 643.5L355.4 640.2L362.0 635.6L362.6 643.9L370.4 644.0L378.6 640.3L385.5 634.9L386.1 643.9L393.2 644.0L400.6 640.2L406.8 634.6L407.4 643.6L415.3 643.8L423.6 640.6L430.5 636.0L431.1 643.0L439.2 642.8L447.8 640.1L454.9 635.8L455.5 643.4L463.0 643.2L470.9 640.3L477.4 635.6L478.0 643.5L485.5 643.5L493.4 640.4L500.0 635.7L500.6 643.4L508.3 643.4L516.4 640.3L523.1 635.7L523.7 643.8L531.0 643.9L538.6 640.7L545.0 635.9L545.6 643.6L552.8 643.5L560.5 640.5L566.8 635.8L567.4 643.8L574.4 643.8L581.7 640.6L587.8 635.9L588.4 644.1L596.0 644.2L604.1 641.1L610.8 636.5L611.4 642.9L618.4 642.8L625.7 640.2L631.8 636.3L632.4 642.8L640.0 642.5L648.1 640.2L654.8 636.3L655.4 643.4L662.7 643.3L670.4 640.6L676.8 636.5L677.4 643.0L685.0 642.7L693.1 640.2L699.8 636.0L700.4 642.9L707.0 642.9L714.0 640.5L719.8 637.0L720.4 642.6L728.0 642.4L736.1 640.2L742.8 636.6L743.4 642.8L750.7 643.1L758.4 640.3L764.8 636.5L765.4 642.5L772.7 642.8L780.4 640.1L786.8 636.4L787.4 643.0L794.1 643.1L801.3 640.4L807.2 636.4L807.8 642.3L815.8 642.2L824.1 639.7L831.1 635.9L831.7 642.7L839.0 642.7L846.7 640.2L853.1 636.4L853.7 642.7L861.3 642.5L869.4 639.6L876.1 634.9L876.7 641.8L883.4 641.7L890.5 639.1L896.4 635.1L897.0 647.8L905.3 647.6L914.0 642.5L921.2 634.6L921.8 641.0L929.4 640.8L937.5 638.7L944.2 635.3L944.8 640.4L951.8 640.3L959.2 638.2L965.4 634.9L966.0 640.6L973.6 640.7L981.7 638.2L988.4 634.6L989.0 640.9L995.4 640.9L1002.2 638.4L1007.8 634.7L1008.4 641.2L1015.7 641.1L1023.4 638.8L1029.8 635.3L1030.4 640.5L1037.9 640.3L1045.8 638.3L1052.4 635.1L1053.0 641.0L1060.2 641.2L1067.7 638.6L1074.0 634.8L1074.6 641.4L1082.1 641.2L1090.1 638.9L1096.7 635.0L1097.3 640.9L1104.5 640.9L1112.1 638.3L1118.4 634.5L1119.0 640.5L1126.9 640.6L1135.2 638.0L1142.1 634.2L1142.7 640.8L1150.6 640.6L1158.9 638.1L1165.8 634.1L1166.4 640.4L1174.3 640.4L1182.6 637.8L1189.5 634.0L1190.1 640.1L1197.6 639.8L1205.6 637.6L1212.2 633.8L1212.8 640.1L1220.3 639.8L1228.2 638.0L1234.8 634.8L1235.4 640.6L1242.9 640.6L1250.9 638.4L1257.5 635.1L1258.0 640.5L1277.0 636.0" fill="none" stroke="#0070c0" stroke-width="2.2" stroke-linejoin="round" stroke-linecap="round" />
<path d="M58.5 591.0L62.0 585.0L70.0 578.0L80.0 574.5L95.0 572.0L95.0 617.0L95.5 423.3L97.0 425.8L98.6 421.3L100.2 423.8L101.8 427.4L103.4 424.2L105.0 425.0L106.6 420.6L108.2 424.3L109.8 422.6L111.4 422.0L111.6 423.3L112.0 427.9L112.5 424.3L113.0 422.5L114.6 422.7L116.2 422.9L117.8 422.8L119.4 423.3L121.0 423.1L122.6 422.9L124.2 422.5L125.8 422.5L127.4 424.0L129.0 423.0L130.6 422.5L132.2 422.7L133.8 423.3L133.6 423.3L134.0 429.2L134.5 424.3L135.4 424.2L137.0 422.8L138.6 424.0L140.2 423.3L141.8 423.1L143.4 423.9L145.0 423.1L146.6 422.5L148.2 423.4L149.8 423.6L151.4 423.5L153.0 422.9L154.6 424.1L155.6 423.3L156.0 429.0L156.5 424.3L156.2 424.0L157.8 424.2L159.4 423.2L161.0 423.9L162.6 423.7L164.2 422.7L165.8 422.4L167.4 422.7L169.0 422.6L170.6 422.5L172.2 423.0L173.8 423.8L175.4 423.0L177.0 423.3L178.6 422.4L179.7 423.3L180.0 392.7L180.7 424.3L180.2 422.8L181.8 424.1L183.4 422.4L185.0 423.3L186.6 423.9L188.2 423.8L189.8 423.7L191.4 423.1L193.0 423.8L194.6 423.9L196.2 423.8L197.8 424.2L199.4 422.6L201.0 424.1L200.6 423.3L201.0 428.3L201.5 424.3L202.6 423.1L204.2 423.7L205.8 422.9L207.4 424.0L209.0 422.4L210.6 423.4L212.2 422.8L213.8 423.1L215.4 423.1L217.0 423.6L218.6 423.9L220.2 423.1L221.8 423.5L223.4 423.0L224.1 423.3L224.5 430.4L225.0 424.3L225.0 422.9L226.6 424.0L228.2 423.0L229.8 422.6L231.4 423.0L233.0 423.7L234.6 422.8L236.2 423.7L237.8 423.4L239.4 423.6L241.0 422.7L242.6 422.6L244.2 422.7L245.8 423.0L247.4 423.2L247.6 423.3L248.0 430.4L248.5 424.3L249.0 422.4L250.6 423.3L252.2 423.1L253.8 423.0L255.4 423.4L257.0 424.1L258.6 422.8L260.2 424.0L261.8 423.0L263.4 423.8L265.0 422.6L266.6 424.2L268.2 423.2L269.8 424.1L270.3 423.3L270.7 428.0L271.2 424.3L271.4 422.8L273.0 423.1L274.6 423.7L276.2 422.7L277.8 422.9L279.4 423.6L281.0 424.1L282.6 423.0L284.2 422.7L284.2 423.3L284.5 411.5L285.2 424.3L285.8 423.0L287.4 424.2L289.0 422.7L290.6 423.5L292.2 423.1L293.0 423.3L293.4 428.6L293.9 424.3L293.8 423.6L295.4 422.8L297.0 423.5L298.6 424.0L300.2 423.9L301.8 423.5L303.4 423.3L305.0 423.4L306.6 422.6L308.2 423.9L309.8 423.6L311.4 423.2L313.0 423.6L314.6 423.2L316.2 423.1L316.5 423.3L316.9 429.3L317.4 424.3L317.8 422.8L319.4 423.5L321.0 423.4L322.6 423.3L324.2 422.5L325.8 423.5L327.4 423.2L329.0 423.5L330.6 423.5L332.2 424.1L333.8 422.7L335.4 423.2L337.0 424.2L338.6 423.7L339.2 423.3L339.6 430.2L340.1 424.3L340.2 423.0L341.8 423.7L343.4 424.2L345.0 423.1L346.6 424.0L348.2 422.6L349.8 424.2L351.4 423.3L353.0 422.8L354.6 423.9L356.2 423.6L357.8 424.1L359.4 423.9L361.0 423.8L361.8 423.3L362.2 429.0L362.7 424.3L362.6 423.3L364.2 424.2L365.8 422.5L367.4 424.0L369.0 423.7L370.6 422.9L372.2 423.9L373.8 423.2L375.4 423.4L377.0 424.0L378.6 422.8L380.2 422.9L381.8 423.6L383.4 422.5L385.0 423.4L385.3 423.3L385.7 429.9L386.2 424.3L386.6 423.8L388.2 423.3L389.8 422.8L391.4 423.8L393.0 423.9L394.6 423.8L396.2 423.4L397.8 424.0L399.4 423.8L401.0 422.7L402.6 423.1L404.2 422.6L405.8 422.5L406.6 423.3L407.0 428.6L407.5 424.3L407.4 423.0L409.0 424.0L410.6 423.9L412.2 422.6L413.8 422.7L415.4 423.1L417.0 423.9L418.6 423.5L420.2 424.0L421.8 422.5L423.4 424.2L425.0 422.8L426.6 423.5L428.2 424.0L429.8 423.7L430.3 423.3L430.7 429.9L431.2 424.3L431.4 422.8L433.0 423.6L434.6 423.2L436.2 422.4L437.8 423.0L439.4 423.0L441.0 423.5L442.6 422.9L444.2 423.5L445.8 423.7L447.4 422.7L449.0 422.6L450.6 423.6L452.2 423.2L453.8 422.6L454.7 423.3L455.1 428.8L455.6 424.3L455.4 422.6L457.0 424.1L458.6 423.5L460.2 423.0L461.8 422.8L463.4 424.2L465.0 423.6L466.6 423.7L468.2 423.0L469.8 423.0L471.4 423.1L473.0 422.7L474.6 423.5L476.2 423.2L477.2 423.3L477.6 428.8L478.1 424.3L477.8 423.9L479.4 423.1L481.0 423.2L482.6 423.3L484.2 424.1L485.8 423.0L487.4 423.7L489.0 422.8L490.6 423.4L492.2 422.9L493.8 424.0L495.4 422.9L497.0 423.9L498.6 423.6L499.8 423.3L500.2 430.1L500.7 424.3L500.2 423.2L501.3 441.4L501.7 424.3L501.8 424.1L503.4 423.1L505.0 423.7L506.6 423.5L508.2 423.2L509.8 422.5L511.4 423.2L513.0 422.9L514.6 423.2L516.2 424.1L517.8 422.9L519.4 423.7L521.0 423.6L522.6 422.8L522.9 423.3L523.3 430.3L523.8 424.3L524.2 423.1L525.8 422.6L527.4 424.0L529.0 422.9L530.6 423.2L532.2 423.0L533.8 423.9L535.4 423.9L537.0 423.5L538.6 423.4L540.2 422.6L541.8 424.0L543.4 422.6L545.0 423.1L544.8 423.3L545.2 430.3L545.7 424.3L546.6 423.1L548.2 423.7L549.8 423.6L551.4 423.0L553.0 424.0L554.6 424.1L556.2 422.4L557.8 423.5L559.4 423.2L561.0 423.1L562.6 423.2L564.2 423.0L565.8 423.6L566.6 423.3L567.0 429.5L567.5 424.3L567.4 423.5L569.0 424.1L570.6 424.2L572.2 424.2L573.8 423.1L575.4 423.9L577.0 423.6L578.6 423.7L580.2 424.2L581.8 422.5L583.4 423.2L585.0 423.1L586.6 423.6L587.6 423.3L588.0 429.1L588.5 424.3L588.2 422.8L589.8 424.2L591.4 422.8L593.0 423.1L594.6 422.7L596.2 423.1L597.8 423.7L599.4 422.6L601.0 422.7L602.6 423.6L604.2 423.5L605.8 423.7L607.4 422.9L609.0 423.9L610.6 423.7L610.6 423.3L611.0 429.9L611.5 424.3L612.2 423.8L613.8 422.6L615.4 423.2L617.0 422.4L618.6 423.9L620.2 424.1L621.8 424.0L623.4 422.4L625.0 423.0L626.6 423.4L628.2 423.4L629.8 422.6L631.4 423.8L631.6 423.3L632.0 429.7L632.5 424.3L632.7 423.3L633.0 416.0L633.3 441.0L633.7 424.3L633.0 422.9L634.6 423.3L636.2 422.6L637.8 423.4L639.4 422.6L641.0 422.6L642.6 423.3L644.2 422.9L645.8 423.8L647.4 422.8L649.0 423.1L650.6 422.5L652.2 422.8L653.8 423.2L654.6 423.3L655.0 430.3L655.5 424.3L655.4 423.4L657.0 423.2L658.6 423.9L660.2 422.6L661.8 423.9L663.4 422.7L665.0 424.1L666.6 423.3L668.2 423.1L669.8 423.5L671.4 424.0L673.0 424.1L674.6 423.1L675.7 423.3L676.0 416.0L676.3 441.0L676.7 424.3L676.2 422.4L676.6 423.3L677.0 430.2L677.5 424.3L677.8 422.7L679.4 423.9L681.0 423.7L682.6 423.7L684.2 422.7L685.8 423.4L687.4 422.5L689.0 422.6L690.6 422.9L692.2 424.1L693.8 423.6L695.4 423.9L697.0 422.5L698.6 423.1L699.6 423.3L700.0 428.2L700.5 424.3L700.2 422.5L701.8 422.9L703.4 422.6L705.0 424.1L706.6 423.0L708.2 423.3L709.8 423.6L711.4 424.0L713.0 424.1L714.6 423.4L716.2 423.3L717.8 424.0L719.4 423.1L719.6 423.3L720.0 428.9L720.5 424.3L720.1 423.3L720.4 410.0L720.7 438.0L721.1 424.3L721.0 422.9L722.6 423.7L724.2 422.9L725.8 423.1L727.4 423.2L729.0 423.3L730.6 423.0L732.2 423.2L733.8 423.2L735.4 422.5L737.0 423.9L738.6 422.5L740.2 423.4L741.8 423.4L742.6 423.3L743.0 429.8L743.5 424.3L743.4 423.1L745.0 422.8L746.6 422.6L748.2 423.1L749.8 423.0L751.4 423.3L753.0 422.8L754.6 423.7L756.2 423.3L757.8 422.4L759.4 423.1L761.0 424.1L762.6 422.4L764.2 423.5L764.6 423.3L765.0 428.5L765.5 424.3L765.8 424.1L767.4 423.1L769.0 423.5L770.6 423.1L772.2 422.9L773.8 423.5L775.4 423.5L777.0 423.0L778.6 423.3L780.2 423.3L781.8 423.8L783.4 422.5L785.0 422.6L786.6 422.9L786.6 423.3L787.0 428.4L787.5 424.3L788.2 422.9L789.8 423.8L791.4 423.2L793.0 423.9L794.6 423.1L796.2 422.9L797.8 423.6L799.4 422.6L801.0 424.2L802.6 423.9L804.2 423.0L805.8 423.0L807.0 423.3L807.4 427.8L807.9 424.3L807.4 423.9L809.0 423.8L809.7 423.3L810.0 416.0L810.3 439.0L810.7 424.3L810.6 423.6L812.2 422.5L813.8 423.8L815.4 422.5L817.0 423.5L818.6 423.4L820.2 424.1L821.8 423.5L823.4 422.4L825.0 424.1L826.6 423.8L828.2 423.4L829.8 422.4L830.9 423.3L831.3 429.6L831.8 424.3L831.4 423.7L833.0 423.2L834.6 423.6L836.2 424.2L837.8 424.1L839.4 422.5L841.0 423.8L842.6 423.2L844.2 423.8L845.8 423.1L847.4 423.2L849.0 423.2L850.6 422.6L852.2 423.0L852.9 423.3L853.3 430.6L853.8 424.3L853.8 423.7L854.0 423.3L854.3 417.0L854.6 440.0L855.0 424.3L855.4 422.5L857.0 422.6L858.6 423.9L860.2 423.6L861.8 423.4L863.4 422.6L865.0 422.6L866.6 423.0L868.2 424.1L869.8 423.4L871.4 424.1L873.0 422.8L874.6 423.1L876.2 423.4L875.9 423.3L876.3 430.7L876.8 424.3L877.8 423.9L879.4 422.6L881.0 424.0L882.6 423.3L884.2 422.5L885.8 423.2L887.4 423.1L889.0 423.6L890.6 424.1L892.2 423.3L893.8 423.6L895.4 423.1L896.2 423.3L896.6 428.2L897.1 424.3L897.0 423.8L897.2 423.3L897.5 415.0L897.8 441.0L898.2 424.3L898.6 422.6L900.2 423.7L901.8 422.7L903.4 423.5L905.0 422.8L906.6 423.0L908.2 422.7L909.8 423.0L911.4 423.5L913.0 423.3L914.6 423.1L916.2 423.4L917.8 423.9L919.4 423.0L921.0 423.5L921.0 423.3L921.4 429.9L921.9 424.3L922.6 423.3L924.2 424.2L925.8 423.0L927.4 423.7L929.0 422.8L930.6 422.9L932.2 423.7L933.8 423.4L935.4 422.9L937.0 422.5L938.6 423.9L940.2 423.1L941.8 423.7L943.4 423.2L944.0 423.3L944.4 429.1L944.9 424.3L945.0 423.5L946.6 423.4L948.2 424.2L949.8 424.0L951.4 423.2L953.0 423.3L954.6 422.8L956.2 423.8L957.8 422.6L959.4 423.0L961.0 423.9L962.6 422.5L964.2 423.7L965.2 423.3L965.6 429.7L966.1 424.3L965.8 423.4L967.4 423.4L969.0 423.0L970.6 422.7L972.2 424.1L973.8 423.8L975.4 423.9L977.0 422.6L978.6 423.8L980.2 422.8L981.8 422.8L983.4 423.4L985.0 423.5L986.6 422.6L988.2 423.8L988.2 423.3L988.6 429.0L989.1 424.3L989.8 423.4L991.4 424.0L993.0 424.1L994.6 423.6L996.2 423.1L997.8 424.1L999.4 423.7L1001.0 422.9L1002.6 423.9L1004.2 423.7L1005.8 422.9L1007.4 422.8L1007.6 423.3L1008.0 430.6L1008.5 424.3L1009.0 422.4L1009.0 423.3L1009.3 412.0L1009.6 439.0L1010.0 424.3L1010.6 423.4L1012.2 422.9L1013.8 422.9L1015.4 422.9L1017.0 422.6L1018.6 423.3L1020.2 422.9L1021.8 422.9L1023.4 422.9L1025.0 423.3L1026.3 423.3L1026.6 411.0L1026.9 440.0L1027.3 424.3L1026.6 424.0L1028.2 422.7L1029.8 423.9L1029.6 423.3L1030.0 430.8L1030.5 424.3L1031.4 423.9L1033.0 423.5L1034.6 423.4L1036.2 423.7L1037.8 423.4L1039.4 423.6L1041.0 424.1L1042.6 423.8L1044.2 422.9L1045.8 422.5L1047.4 424.1L1049.0 423.1L1050.6 423.8L1052.2 422.8L1052.2 423.3L1052.6 427.9L1053.1 424.3L1053.5 423.3L1053.8 411.5L1054.1 441.3L1054.5 424.3L1053.8 423.2L1055.4 423.1L1057.0 423.7L1058.6 424.1L1060.2 423.3L1061.8 423.4L1063.4 423.0L1065.0 422.8L1066.6 424.1L1068.2 422.6L1069.8 424.1L1071.4 423.6L1073.0 422.5L1073.8 423.3L1074.2 429.9L1074.7 424.3L1074.6 424.0L1075.7 423.3L1076.0 411.0L1076.3 437.0L1076.7 424.3L1076.2 422.6L1077.8 423.4L1079.4 422.6L1081.0 424.2L1082.6 423.0L1084.2 424.0L1085.8 422.5L1087.4 423.6L1089.0 422.5L1090.6 422.5L1092.2 423.4L1093.8 424.2L1095.4 423.6L1096.5 423.3L1096.9 428.2L1097.4 424.3L1097.0 423.9L1098.6 423.8L1098.7 423.3L1099.0 411.0L1099.3 437.0L1099.7 424.3L1100.2 423.3L1101.8 422.5L1103.4 423.3L1105.0 422.7L1106.6 423.3L1108.2 423.0L1109.8 423.3L1111.4 422.8L1113.0 423.7L1114.6 423.2L1116.2 423.3L1117.8 422.5L1118.2 423.3L1118.6 427.9L1119.1 424.3L1119.4 423.3L1120.7 423.3L1121.0 411.0L1121.3 437.0L1121.7 424.3L1121.0 423.4L1122.6 424.2L1124.2 423.4L1125.8 422.6L1127.4 422.9L1129.0 423.0L1130.6 423.7L1132.2 424.1L1133.8 424.2L1135.4 424.1L1137.0 424.1L1138.6 423.9L1140.2 424.1L1141.8 422.4L1141.9 423.3L1142.3 428.7L1142.8 424.3L1142.7 423.3L1143.0 411.0L1143.3 440.0L1143.7 424.3L1143.4 423.3L1145.0 423.5L1146.6 423.6L1148.2 423.5L1149.8 423.5L1151.4 424.1L1153.0 422.6L1154.6 423.3L1156.2 424.1L1157.8 422.5L1159.4 422.6L1161.0 424.0L1162.6 424.1L1164.2 422.4L1165.8 422.5L1165.6 423.3L1166.0 430.0L1166.5 424.3L1167.4 423.9L1169.0 423.6L1170.6 423.3L1172.2 423.4L1173.8 423.8L1175.4 423.9L1177.0 422.4L1178.6 422.5L1180.2 423.8L1181.8 424.2L1183.4 423.9L1185.0 423.1L1186.6 423.0L1188.2 423.0L1189.3 423.3L1189.7 430.8L1190.2 424.3L1189.8 422.4L1191.4 423.8L1193.0 422.9L1194.6 423.5L1196.2 423.3L1197.8 423.0L1199.4 423.6L1201.0 423.2L1202.6 422.8L1204.2 424.0L1205.8 422.7L1207.4 422.7L1209.0 422.9L1210.6 423.3L1212.2 423.8L1212.0 423.3L1212.4 428.2L1212.9 424.3L1213.8 423.0L1215.4 422.8L1217.0 423.6L1218.6 422.9L1220.2 423.3L1221.8 422.9L1223.4 424.0L1225.0 422.7L1226.6 422.8L1228.2 422.9L1229.8 423.0L1231.4 423.7L1233.0 423.6L1234.6 423.8L1234.6 423.3L1235.0 428.8L1235.5 424.3L1236.2 423.4L1237.8 422.5L1239.4 423.8L1241.0 422.8L1242.6 422.8L1244.2 423.1L1245.8 424.2L1247.4 423.1L1249.0 423.0L1250.6 424.0L1252.2 424.2L1253.8 423.1L1255.4 422.6L1257.0 423.8L1258.6 423.8L1260.2 423.0L1261.8 423.8L1263.4 423.1L1265.0 422.9L1266.6 423.5L1268.2 423.7L1269.8 423.3L1271.4 423.9L1273.0 422.4L1274.6 423.3L1276.2 423.1" fill="none" stroke="#e46c0a" stroke-width="2.0" stroke-linejoin="round" stroke-linecap="round" />
<rect x="1026.5" y="405" width="5" height="34" rx="1.5" fill="#e46c0a"/>
<rect x="157.5" y="418" width="6" height="10" rx="1.5" fill="#e46c0a"/>
<path d="M58.5 632.0L60.0 612.0L63.0 580.0L66.0 545.0L76.0 435.0L86.0 330.0L94.0 245.0L96.0 229.0L98.5 226.5L98.5 226.5C115.4 226.5 166.4 226.6 200.0 226.5C233.6 226.4 266.7 226.3 300.0 226.2C333.3 226.1 369.5 225.9 400.0 225.8C430.5 225.7 459.7 225.6 483.0 225.4C506.3 225.2 517.2 225.1 540.0 224.6C562.8 224.1 591.0 223.4 620.0 222.6C649.0 221.8 682.6 220.7 714.0 219.7C745.4 218.7 777.0 217.8 808.5 216.7C840.0 215.6 880.9 214.2 902.8 213.4C924.7 212.6 926.0 212.5 940.0 211.7C954.0 210.9 971.3 209.5 987.0 208.4C1002.7 207.3 1018.3 206.3 1034.0 204.9C1049.7 203.5 1065.2 202.1 1081.0 200.0C1096.8 197.9 1112.7 195.2 1128.5 192.4C1144.3 189.6 1161.8 186.1 1175.6 183.0C1189.3 179.9 1200.4 176.4 1211.0 173.6C1221.6 170.8 1232.7 167.8 1239.0 166.0C1245.3 164.2 1245.2 164.9 1248.7 163.0C1252.2 161.1 1257.0 157.0 1260.0 154.7C1263.0 152.4 1265.2 150.2 1267.0 149.0C1268.8 147.8 1269.3 148.0 1271.0 147.8C1272.7 147.6 1276.0 148.0 1277.0 148.0" fill="none" stroke="#ff0000" stroke-width="3.5" stroke-linejoin="round" stroke-linecap="round" />
<path d="M58.5 597.0L62.0 590.0L68.0 583.0L80.0 577.0L96.0 572.0L97.0 592.0L98.2 586.0L100.0 582.0L101.8 580.1L103.6 576.3L105.4 576.0L107.2 576.6L109.0 576.3L110.8 576.1L112.6 575.1L114.4 578.1L116.2 578.9L118.0 580.1L119.8 580.7L121.6 579.0L123.4 577.2L125.2 576.3L127.0 576.0L128.8 575.8L130.6 576.1L132.4 575.4L134.2 576.1L136.0 576.6L137.8 576.8L139.6 576.1L141.4 573.7L143.2 573.5L145.0 573.4L146.8 572.6L148.6 572.7L150.4 572.5L152.2 572.4L154.0 573.0L155.8 573.1L157.6 574.1L159.4 576.2L161.2 576.4L163.0 577.3L164.8 576.1L166.6 577.2L168.4 580.6L170.2 582.0L172.0 579.6L173.8 578.4L175.6 577.5L177.4 576.7L179.2 576.7L181.0 579.3L182.8 580.9L184.6 582.8L186.4 584.2L188.2 584.5L190.0 584.1L191.8 582.3L193.6 579.6L195.4 578.5L197.2 579.3L199.0 578.9L200.8 577.1L202.6 578.7L204.4 578.5L206.2 578.2L208.0 578.8L209.8 578.8L211.6 579.6L213.4 578.7L215.2 578.3L217.0 578.5L218.8 579.4L220.6 578.8L222.4 579.0L224.2 578.6L226.0 578.0L227.8 577.7L229.6 578.1L231.4 577.6L233.2 577.9L235.0 578.4L236.8 578.0L238.6 578.1L240.4 578.2L242.2 577.7L244.0 577.7L245.8 578.5L247.6 578.0L249.4 578.4L251.2 579.3L253.0 579.8L254.8 581.2L256.6 584.4L258.4 583.9L260.2 585.0L262.0 584.9L263.8 584.6L265.6 581.9L267.4 580.9L269.2 580.1L271.0 578.6L272.8 579.0L274.6 580.5L276.4 579.7L278.2 580.1L280.0 579.4L281.8 580.5L283.6 579.4L285.4 579.0L287.2 579.8L289.0 579.2L290.8 579.5L292.6 579.5L294.4 580.2L296.2 579.6L298.0 579.5L299.8 578.9L301.6 579.8L303.4 579.5L305.2 580.0L307.0 580.2L308.8 579.9L310.6 579.4L312.4 580.1L314.2 580.1L316.0 580.4L317.8 581.0L319.6 579.8L321.4 580.1L323.2 579.5L325.0 580.7L326.8 579.8L328.6 580.7L330.4 580.7L332.2 579.8L334.0 580.8L335.8 580.2L337.6 580.1L339.4 580.3L341.2 580.9L343.0 580.2L344.8 580.2L346.6 579.9L348.4 580.7L350.2 580.2L352.0 579.9L353.8 579.7L355.6 579.7L357.4 580.7L359.2 580.7L361.0 581.0L362.8 580.9L364.6 580.5L366.4 580.7L368.2 580.5L370.0 580.7L371.8 580.7L373.6 579.7L375.4 580.7L377.2 579.9L379.0 579.8L380.8 580.9L382.6 579.4L384.4 580.2L386.2 579.9L388.0 580.7L389.8 580.4L391.6 580.9L393.4 580.9L395.2 580.4L397.0 579.5L398.8 580.5L400.6 579.6L402.4 581.0L404.2 581.0L406.0 581.9L407.8 583.6L409.6 586.2L411.4 584.8L413.2 583.6L415.0 581.5L416.8 580.3L418.6 581.0L420.4 579.6L422.2 580.6L424.0 580.2L425.8 579.9L427.6 579.8L429.4 579.0L431.2 579.4L433.0 578.9L434.8 578.7L436.6 578.6L438.4 578.6L440.2 578.1L442.0 578.4L443.8 579.5L445.6 578.6L447.4 579.4L449.2 579.6L451.0 579.6L452.8 579.3L454.6 579.1L456.4 579.7L458.2 581.6L460.0 584.4L461.8 586.0L463.6 585.1L465.4 582.8L467.2 582.6L469.0 582.1L470.8 580.6L472.6 581.2L474.4 580.2L476.2 580.3L478.0 580.7L479.8 581.4L481.6 582.6L483.4 584.4L485.2 584.6L487.0 584.2L488.8 585.7L490.6 585.3L492.4 585.3L494.2 585.8L496.0 585.1L497.8 585.1L499.6 585.8L501.4 585.3L503.2 585.6L505.0 585.2L506.8 585.0L508.6 585.4L510.4 585.6L512.2 586.2L514.0 585.6L515.8 585.1L517.6 585.0L519.0 584.0L519.5 626.0L522.0 630.0L524.0 629.2L526.5 629.9L529.0 631.3L531.5 628.8L534.0 629.7L536.5 630.5L539.0 630.7L541.5 630.1L544.0 630.3L546.5 631.2L549.0 631.1L551.5 629.1L554.0 629.9L556.5 631.3L559.0 629.9L561.5 628.8L564.0 630.6L566.5 628.4L569.0 628.7L571.5 629.9L574.0 629.0L576.5 630.4L579.0 630.4L581.5 629.1L584.0 630.5L586.5 630.1L589.0 630.2L591.5 629.5L594.0 629.4L596.5 628.4L599.0 629.5L601.5 630.9L604.0 630.7L606.5 628.2L609.0 628.2L611.5 628.8L614.0 630.1L616.5 629.3L619.0 628.3L621.5 629.2L624.0 629.6L626.5 630.1L629.0 629.1L631.5 629.8L634.0 629.9L636.5 629.7L639.0 628.0L641.5 630.0L644.0 628.2L646.5 628.0L649.0 629.2L651.5 627.8L654.0 628.0L656.5 628.9L659.0 629.1L661.5 628.0L664.0 630.6L666.5 630.2L669.0 629.1L671.5 629.4L674.0 628.6L676.5 630.6L679.0 628.0L681.5 628.5L684.0 628.3L686.5 630.2L689.0 629.1L691.5 628.8L694.0 628.7L696.5 630.2L699.0 628.3L701.5 629.9L704.0 629.6L706.5 628.9L709.0 628.6L711.5 628.9L714.0 628.9L716.5 628.5L719.0 629.5L721.5 628.8L724.0 628.5L726.5 630.0L729.0 629.0L731.5 629.1L734.0 630.3L736.5 629.1L739.0 628.8L741.5 630.4L744.0 630.7L746.5 630.1L749.0 629.0L751.5 629.8L754.0 630.0L756.5 628.7L759.0 630.0L761.5 630.7L764.0 629.8L766.5 629.9L769.0 629.2L771.5 629.8L774.0 628.6L776.5 630.2L779.0 629.5L781.5 630.9L784.0 629.0L786.5 630.1L789.0 628.0L791.5 629.2L794.0 630.3L796.5 628.8L799.0 629.9L801.5 628.7L804.0 629.2L806.5 631.0L809.0 628.7L811.5 630.8L814.0 628.3L816.5 629.9L819.0 630.6L821.5 630.7L824.0 629.3L826.5 629.9L829.0 630.3L831.5 630.5L834.0 630.4L836.5 630.0L839.0 629.0L841.5 630.4L844.0 629.9L846.5 629.9L849.0 631.2L851.5 628.7L854.0 630.7L856.5 629.3L859.0 630.5L861.5 631.2L864.0 629.2L866.5 630.1L869.0 630.0L871.5 629.9L874.0 628.9L876.5 630.3L879.0 631.1L881.5 630.4L884.0 629.3L886.5 630.9L889.0 629.8L891.5 628.9L894.0 630.2L896.5 629.7L899.0 629.9L901.5 631.2L904.0 629.9L906.5 631.0L909.0 629.1L911.5 630.3L914.0 628.2L916.5 628.8L919.0 629.9L921.5 629.9L924.0 630.2L926.5 628.8L929.0 628.4L931.5 628.6L934.0 629.1L936.5 627.5L939.0 628.5L941.5 629.3L944.0 627.7L946.5 628.1L949.0 629.8L951.5 629.9L954.0 627.8L956.5 627.5L959.0 627.3L961.5 627.1L964.0 629.2L966.5 629.0L969.0 627.5L971.5 628.1L974.0 628.7L976.5 626.6L979.0 628.9L981.5 629.0L984.0 627.0L986.5 628.4L989.0 628.3L991.5 627.2L994.0 628.8L996.5 626.7L999.0 627.4L1001.5 626.9L1004.0 627.2L1006.5 628.3L1009.0 627.5L1011.5 627.5L1014.0 628.6L1016.5 626.3L1019.0 626.2L1021.5 627.3L1024.0 625.9L1026.5 628.2L1029.0 626.3L1031.5 626.5L1034.0 626.4L1036.5 627.6L1039.0 627.8L1041.5 627.0L1044.0 625.4L1046.5 625.9L1049.0 626.9L1051.5 625.4L1054.0 627.3L1056.5 627.2L1059.0 625.2L1061.5 625.6L1064.0 625.2L1066.5 626.7L1069.0 624.6L1071.5 626.6L1074.0 624.7L1076.5 627.0L1079.0 626.1L1081.5 626.2L1084.0 624.8L1086.5 624.6L1089.0 625.6L1091.5 627.5L1094.0 626.3L1096.5 627.1L1099.0 624.7L1101.5 624.8L1104.0 624.6L1106.5 626.6L1109.0 625.0L1111.5 625.3L1114.0 626.5L1116.5 626.6L1119.0 625.5L1121.5 625.9L1124.0 625.4L1126.5 626.2L1129.0 625.6L1131.5 625.6L1134.0 625.2L1136.5 625.4L1139.0 625.3L1141.5 624.5L1144.0 625.4L1146.5 626.3L1149.0 625.3L1151.5 624.8L1154.0 627.0L1156.5 625.9L1159.0 626.0L1161.5 625.4L1164.0 627.2L1166.5 626.8L1169.0 626.4L1171.5 626.5L1174.0 626.6L1176.5 626.0L1179.0 625.7L1181.5 625.7L1184.0 626.0L1186.5 625.9L1189.0 626.1L1191.5 626.1L1194.0 626.9L1196.5 627.2L1199.0 625.2L1201.5 624.6L1204.0 625.4L1206.5 624.6L1209.0 626.9L1211.5 626.4L1214.0 625.4L1216.5 625.1L1219.0 627.1L1221.5 627.0L1224.0 626.6L1226.5 626.6L1229.0 626.7L1231.5 625.9L1234.0 625.7L1236.5 626.2L1239.0 627.1L1241.5 627.5L1244.0 627.3L1247.0 624.0L1249.0 585.0L1252.0 575.0L1258.0 572.0L1264.0 578.0L1268.0 585.0L1272.0 583.0L1277.0 588.0" fill="none" stroke="#984807" stroke-width="2.5" stroke-linejoin="round" stroke-linecap="round" />
<path d="M58.5 568.0L96.0 570.0L97.0 232.0L100.0 230.5L102.0 230.9L105.0 230.0L108.0 230.2L111.0 231.1L114.0 230.6L117.0 230.5L120.0 230.3L123.0 230.9L126.0 230.5L129.0 231.1L132.0 230.0L135.0 231.1L138.0 229.9L141.0 230.1L144.0 230.4L147.0 230.7L150.0 230.0L153.0 230.6L156.0 231.0L159.0 230.4L162.0 230.8L165.0 230.6L168.0 230.6L171.0 230.1L174.0 230.5L177.0 231.0L180.0 230.7L183.0 230.2L186.0 230.4L189.0 230.6L192.0 230.3L195.0 230.6L198.0 230.7L201.0 229.9L204.0 230.2L207.0 230.7L210.0 230.2L213.0 230.0L216.0 230.8L219.0 230.3L222.0 231.0L225.0 230.6L228.0 230.0L231.0 230.7L234.0 230.2L237.0 230.9L240.0 230.8L243.0 230.8L246.0 230.0L249.0 229.9L252.0 230.9L255.0 230.1L258.0 230.1L261.0 229.9L264.0 230.1L267.0 230.5L270.0 231.0L273.0 230.3L276.0 230.2L279.0 230.9L282.0 230.1L285.0 230.7L288.0 230.6L291.0 231.0L294.0 230.0L297.0 230.6L300.0 230.4L303.0 230.9L306.0 230.2L309.0 230.8L312.0 230.1L315.0 230.5L318.0 231.1L321.0 230.2L324.0 230.2L327.0 231.0L330.0 230.7L333.0 230.0L336.0 230.1L339.0 230.2L342.0 230.2L345.0 230.9L348.0 230.7L351.0 231.1L354.0 230.7L357.0 230.7L360.0 230.4L363.0 230.8L366.0 230.5L369.0 230.0L372.0 230.5L375.0 230.4L378.0 230.5L381.0 230.0L384.0 229.9L387.0 231.1L390.0 230.3L393.0 230.3L396.0 230.1L399.0 230.6L402.0 231.0L405.0 230.1L408.0 230.5L411.0 230.5L414.0 230.8L417.0 230.6L420.0 230.2L423.0 230.1L426.0 230.8L429.0 230.0L432.0 230.9L435.0 229.9L438.0 230.1L441.0 230.5L444.0 230.9L447.0 230.6L450.0 230.8L453.0 230.8L456.0 230.8L459.0 230.0L462.0 230.9L465.0 230.1L468.0 230.1L471.0 229.9L474.0 229.9L477.0 231.0L480.0 230.4L483.0 230.0L486.0 230.0L489.0 230.9L492.0 230.6L495.0 231.0L498.0 229.9L501.0 230.0L504.0 230.2L505.0 230.5L506.0 241.0L508.0 240.9L511.0 241.0L514.0 241.3L517.0 241.9L520.0 241.7L523.0 241.8L526.0 242.3L529.0 242.2L532.0 242.2L535.0 242.6L538.0 242.7L541.0 242.7L544.0 242.9L547.0 242.6L550.0 243.2L553.0 243.0L556.0 243.2L559.0 243.1L562.0 243.9L565.0 243.7L568.0 243.7L571.0 243.9L574.0 244.3L577.0 243.8L580.0 244.1L583.0 244.4L586.0 244.2L589.0 244.6L592.0 244.9L595.0 244.3L598.0 244.6L601.0 244.6L604.0 245.0L607.0 245.0L610.0 245.0L613.0 245.2L616.0 244.6L619.0 244.7L622.0 245.1L625.0 245.0L628.0 244.5L631.0 245.2L634.0 245.0L637.0 245.1L640.0 244.7L643.0 244.9L646.0 245.2L649.0 245.2L652.0 244.9L655.0 245.2L658.0 245.2L661.0 245.1L664.0 245.0L667.0 245.2L670.0 244.6L673.0 244.8L676.0 244.9L679.0 244.6L682.0 245.1L685.0 244.5L688.0 245.0L691.0 244.7L694.0 244.7L697.0 245.0L700.0 244.6L703.0 244.8L706.0 245.2L709.0 245.3L712.0 244.7L715.0 244.8L718.0 245.0L721.0 244.6L724.0 245.2L727.0 244.7L730.0 244.9L733.0 244.8L736.0 244.5L739.0 244.5L742.0 244.5L745.0 244.8L748.0 244.7L751.0 245.3L754.0 245.0L757.0 244.6L760.0 245.1L763.0 244.7L766.0 244.9L769.0 245.1L772.0 245.2L775.0 245.3L778.0 244.9L781.0 244.8L784.0 244.9L787.0 244.8L790.0 245.1L793.0 244.9L796.0 245.1L799.0 244.7L802.0 245.2L805.0 245.3L808.0 244.7L811.0 245.1L814.0 244.7L817.0 244.6L820.0 244.9L823.0 244.7L826.0 245.2L829.0 245.0L832.0 245.1L835.0 245.4L838.0 244.6L841.0 244.7L844.0 244.6L847.0 245.0L850.0 245.3L853.0 245.1L856.0 245.0L859.0 245.3L862.0 244.9L865.0 244.7L868.0 245.1L871.0 244.6L874.0 244.8L877.0 244.6L880.0 244.8L883.0 244.7L886.0 245.1L889.0 244.7L892.0 245.1L895.0 245.3L898.0 244.9L901.0 244.7L904.0 245.2L907.0 245.2L910.0 245.4L913.0 245.1L916.0 245.1L919.0 245.3L922.0 245.2L925.0 245.4L928.0 244.9L931.0 245.3L934.0 245.2L937.0 245.0L940.0 244.7L943.0 245.1L946.0 244.9L949.0 245.2L952.0 245.1L955.0 245.1L958.0 244.7L961.0 244.8L964.0 245.2L967.0 245.2L970.0 245.5L973.0 245.3L976.0 244.9L979.0 245.1L982.0 245.1L985.0 245.4L988.0 245.0L991.0 245.4L994.0 245.1L997.0 245.0L1000.0 245.1L1003.0 245.0L1006.0 245.5L1009.0 244.8L1012.0 245.0L1015.0 244.8L1018.0 245.3L1021.0 244.9L1024.0 244.9L1027.0 245.1L1030.0 245.2L1033.0 245.4L1036.0 245.1L1039.0 245.0L1042.0 245.0L1045.0 245.5L1048.0 244.9L1051.0 244.8L1054.0 245.5L1057.0 245.2L1060.0 244.9L1063.0 244.9L1066.0 245.5L1069.0 245.4L1072.0 244.8L1075.0 245.3L1078.0 245.0L1081.0 245.1L1084.0 245.3L1087.0 244.8L1090.0 245.5L1093.0 245.1L1096.0 244.9L1099.0 245.4L1102.0 244.8L1105.0 244.7L1108.0 245.1L1111.0 244.9L1114.0 245.1L1117.0 245.0L1120.0 244.4L1123.0 244.2L1126.0 244.6L1129.0 244.4L1132.0 244.2L1135.0 244.6L1138.0 243.9L1141.0 244.2L1144.0 243.7L1147.0 244.3L1150.0 244.2L1153.0 243.9L1156.0 243.5L1159.0 243.8L1162.0 243.8L1165.0 243.7L1168.0 243.0L1171.0 243.3L1174.0 242.9L1177.0 243.2L1180.0 243.4L1183.0 243.3L1186.0 242.7L1189.0 242.8L1192.0 242.6L1195.0 242.4L1198.0 242.7L1201.0 242.7L1204.0 242.3L1207.0 242.2L1210.0 242.4L1213.0 242.3L1216.0 242.0L1219.0 241.7L1222.0 241.6L1225.0 241.6L1228.0 242.0L1231.0 241.7L1234.0 241.7L1237.0 241.4L1240.0 241.3L1243.0 240.6L1246.0 240.3L1249.0 239.2L1252.0 237.8L1255.0 237.1L1255.5 236.9L1256.0 236.7L1256.5 236.5L1257.0 236.3L1257.5 236.2L1258.0 236.0L1258.5 235.0L1259.0 234.0L1259.5 233.0L1260.0 232.0L1260.5 231.0L1261.0 230.0L1261.5 229.0L1262.0 228.0L1262.5 223.5L1263.0 219.0L1263.5 214.5L1264.0 210.0L1264.5 200.0L1265.0 190.0L1265.5 180.0L1266.0 170.0L1266.5 185.0L1267.0 200.0L1267.5 215.0L1268.0 222.0L1268.5 229.0L1269.0 236.0L1269.5 237.1L1270.0 238.2L1270.5 239.4L1271.0 240.5L1271.5 240.5L1272.0 240.6L1272.5 240.6L1273.0 240.7L1273.5 240.7L1274.0 240.8L1274.5 240.8L1275.0 240.8L1275.5 240.9L1276.0 240.9L1276.5 241.0L1277.0 241.0" fill="none" stroke="#00b050" stroke-width="2.2" stroke-linejoin="round" stroke-linecap="round" />
<path d="M58.5 569.0L95.0 570.0L95.2 232.0L97.5 230.0L99.0 237.0L101.0 243.0L104.0 246.5L110.0 247.4L1277.0 247.5" fill="none" stroke="#ee8639" stroke-width="3.0" stroke-linejoin="round" stroke-linecap="round" />
<path d="M58.5 564.5L96.0 567.0L97.0 268.0L100.0 265.0L110.0 263.5L1277.0 263.5" fill="none" stroke="#7799cc" stroke-width="3.0" stroke-linejoin="round" stroke-linecap="round" />
<path d="M58.5 567.0L96.0 569.0L97.0 275.0L100.0 269.0L106.0 268.0L114.0 270.5L120.0 269.5L130.0 266.5L1277.0 266.5" fill="none" stroke="#c8706e" stroke-width="3.0" stroke-linejoin="round" stroke-linecap="round" />
<path d="M58.5 570.5L96.0 572.0L98.0 580.0L100.0 565.0L102.0 560.8L105.0 555.4L108.0 553.2L111.0 551.9L114.0 551.7L117.0 552.0L120.0 552.2L123.0 551.4L126.0 551.7L129.0 551.3L132.0 551.4L135.0 551.3L138.0 551.7L141.0 551.3L144.0 551.3L147.0 552.0L150.0 551.9L153.0 551.8L156.0 552.2L159.0 551.6L162.0 552.1L165.0 551.6L168.0 551.8L171.0 551.6L174.0 552.6L177.0 552.9L180.0 552.1L183.0 552.3L186.0 552.0L189.0 552.2L192.0 553.0L195.0 553.4L198.0 552.4L201.0 552.7L204.0 553.4L207.0 552.8L210.0 553.7L213.0 553.1L216.0 553.3L219.0 553.0L222.0 553.1L225.0 553.4L228.0 553.2L231.0 553.9L234.0 553.0L237.0 553.9L240.0 554.2L243.0 553.6L246.0 553.5L249.0 553.4L252.0 553.4L255.0 554.5L258.0 554.3L261.0 553.5L264.0 554.2L267.0 554.5L270.0 554.1L273.0 553.8L276.0 554.4L279.0 554.4L282.0 555.3L285.0 554.5L288.0 555.4L291.0 555.3L294.0 555.0L297.0 554.4L300.0 555.4L303.0 554.4L306.0 555.1L309.0 554.4L312.0 554.4L315.0 554.8L318.0 554.4L321.0 555.6L324.0 555.0L327.0 555.4L330.0 555.5L333.0 555.2L336.0 555.0L339.0 554.8L342.0 555.2L345.0 555.0L348.0 554.3L351.0 554.8L354.0 554.6L357.0 554.7L360.0 555.0L363.0 554.9L366.0 554.8L369.0 555.1L372.0 555.1L375.0 554.1L378.0 554.1L381.0 554.0L384.0 554.1L387.0 555.2L390.0 554.3L393.0 554.4L396.0 554.5L399.0 554.6L402.0 554.2L405.0 555.0L408.0 554.4L411.0 555.2L414.0 555.2L417.0 554.1L420.0 554.9L423.0 554.4L426.0 555.5L429.0 554.4L432.0 554.8L435.0 555.5L438.0 555.3L441.0 555.5L444.0 555.2L447.0 555.4L450.0 555.0L453.0 555.4L456.0 555.2L459.0 555.9L462.0 555.1L465.0 555.2L468.0 555.4L471.0 555.9L474.0 556.0L477.0 555.2L480.0 556.7L483.0 556.5L486.0 555.8L489.0 555.5L492.0 556.5L495.0 556.7L498.0 555.5L501.0 556.4L504.0 556.4L507.0 556.6L510.0 555.6L513.0 555.5L516.0 555.5L519.0 555.6L522.0 556.6L525.0 556.6L528.0 556.0L531.0 555.5L534.0 555.8L537.0 555.6L540.0 556.2L543.0 556.3L546.0 556.4L549.0 555.9L552.0 555.9L555.0 556.0L558.0 555.8L561.0 555.9L564.0 556.3L567.0 556.3L570.0 555.8L573.0 556.1L576.0 555.5L579.0 555.4L582.0 555.8L585.0 555.8L588.0 555.3L591.0 555.4L594.0 555.9L597.0 556.6L600.0 556.5L603.0 555.3L606.0 555.7L609.0 555.8L612.0 555.7L615.0 555.5L618.0 556.1L621.0 556.5L624.0 555.8L627.0 555.5L630.0 555.4L633.0 555.3L636.0 556.4L639.0 555.6L642.0 556.3L645.0 556.4L648.0 555.4L651.0 555.6L654.0 555.7L657.0 556.4L660.0 556.3L663.0 555.7L666.0 555.9L669.0 555.8L672.0 556.0L675.0 556.4L678.0 555.7L681.0 556.4L684.0 556.6L687.0 556.1L690.0 556.6L693.0 556.6L696.0 555.5L699.0 556.7L702.0 555.6L705.0 556.4L708.0 555.5L711.0 555.7L714.0 555.9L717.0 556.5L720.0 556.3L723.0 555.6L726.0 556.6L729.0 556.5L732.0 556.0L735.0 555.4L738.0 555.7L741.0 555.7L744.0 555.9L747.0 556.6L750.0 556.1L753.0 556.4L756.0 555.4L759.0 555.6L762.0 556.3L765.0 555.8L768.0 555.6L771.0 555.4L774.0 555.4L777.0 555.9L780.0 556.1L783.0 555.9L786.0 556.1L789.0 555.7L792.0 555.3L795.0 556.2L798.0 555.8L801.0 556.0L804.0 555.8L807.0 555.6L810.0 555.3L813.0 555.7L816.0 555.6L819.0 555.4L822.0 555.2L825.0 555.8L828.0 555.2L831.0 556.4L834.0 555.6L837.0 555.7L840.0 555.8L843.0 555.1L846.0 555.2L849.0 556.2L852.0 555.8L855.0 555.7L858.0 555.5L861.0 556.0L864.0 555.7L867.0 556.1L870.0 556.1L873.0 556.2L876.0 555.9L879.0 555.8L882.0 555.5L885.0 555.6L888.0 555.7L891.0 555.6L894.0 556.0L897.0 556.0L900.0 554.9L903.0 555.8L906.0 555.6L909.0 555.6L912.0 556.0L915.0 554.8L918.0 555.4L921.0 555.2L924.0 556.0L927.0 554.9L930.0 555.4L933.0 554.8L936.0 555.7L939.0 555.3L942.0 555.6L945.0 555.0L948.0 555.8L951.0 554.6L954.0 554.8L957.0 555.5L960.0 555.7L963.0 555.6L966.0 554.9L969.0 554.6L972.0 555.4L975.0 555.4L978.0 554.5L981.0 555.7L984.0 555.1L987.0 554.4L990.0 555.0L993.0 554.8L996.0 554.5L999.0 555.5L1002.0 555.6L1005.0 554.4L1008.0 554.8L1011.0 554.6L1014.0 555.1L1017.0 554.3L1020.0 554.6L1023.0 554.6L1026.0 554.7L1029.0 554.6L1032.0 554.8L1035.0 555.3L1038.0 555.2L1041.0 555.2L1044.0 555.0L1047.0 554.1L1050.0 554.1L1053.0 554.4L1056.0 554.6L1059.0 554.6L1062.0 554.2L1065.0 555.0L1068.0 554.1L1071.0 553.6L1074.0 553.7L1077.0 553.8L1080.0 554.5L1083.0 554.6L1086.0 553.5L1089.0 553.7L1092.0 553.7L1095.0 554.5L1098.0 554.6L1101.0 553.7L1104.0 553.4L1107.0 554.6L1110.0 554.6L1113.0 554.2L1116.0 553.8L1119.0 554.2L1122.0 554.2L1125.0 553.8L1128.0 553.4L1131.0 553.7L1134.0 553.9L1137.0 553.4L1140.0 553.8L1143.0 553.1L1146.0 554.2L1149.0 553.1L1152.0 553.1L1155.0 554.1L1158.0 554.1L1161.0 554.0L1164.0 553.8L1167.0 553.8L1170.0 553.7L1173.0 553.4L1176.0 552.6L1179.0 553.5L1182.0 553.7L1185.0 553.6L1188.0 552.5L1191.0 552.5L1194.0 553.4L1197.0 553.0L1200.0 553.6L1203.0 553.7L1206.0 552.9L1209.0 553.2L1212.0 553.2L1215.0 553.3L1218.0 552.8L1221.0 553.2L1224.0 552.4L1227.0 553.6L1230.0 553.3L1233.0 553.4L1236.0 552.9L1239.0 552.6L1242.0 552.9L1245.0 553.3L1248.0 553.3L1251.0 553.0L1254.0 553.1L1257.0 554.0L1260.0 554.0L1263.0 554.3L1266.0 554.6L1269.0 555.1L1272.0 555.8L1275.0 556.4" fill="none" stroke="#b7dde8" stroke-width="2.4" stroke-linejoin="round" stroke-linecap="round" />
<path d="M1247.8 420V717" fill="none" stroke="#70b3ca" stroke-width="3" stroke-linejoin="round" stroke-linecap="round" />
<path d="M58.5 717.0L96.5 717.0L96.5 118.4L483.5 118.4L483.5 717.0L1277.0 717.0" fill="none" stroke="#9781b5" stroke-width="3" stroke-linejoin="round" stroke-linecap="round" stroke-dasharray="6 6"/>
<path d="M58.5 717.0L505.2 717.0L505.2 567.0L1247.5 567.0L1247.5 717.0L1277.0 717.0" fill="none" stroke="#70b3ca" stroke-width="3" stroke-linejoin="round" stroke-linecap="round" stroke-dasharray="6 6"/>
<path d="M58.5 717.0L118.2 717.0L118.2 286.5L504.7 286.5L504.7 507.5L1247.5 507.5L1247.5 717.0L1277.0 717.0" fill="none" stroke="#f4a46c" stroke-width="3" stroke-linejoin="round" stroke-linecap="round" stroke-dasharray="6 6"/>
<path d="M58.5 717.0L519.2 717.0L519.2 130.2L525.4 130.2L525.4 124.4L1228.6 124.4L1228.6 148.0L1237.4 148.0L1239.5 195.0L1241.0 240.0L1242.2 280.0L1244.3 342.7L1246.4 405.4L1247.8 430.0L1248.0 717.0L1277.0 717.0" fill="none" stroke="#00b050" stroke-width="3" stroke-linejoin="round" stroke-linecap="round" stroke-dasharray="6 6"/>
<path d="M58.5 717.0L1248.3 717.0L1248.3 148.6L1266.8 148.6L1266.8 717.0L1277.0 717.0" fill="none" stroke="#d99694" stroke-width="3" stroke-linejoin="round" stroke-linecap="round" stroke-dasharray="6 6"/>
<path d="M58.7 209.5C59.1 209.2 60.4 207.6 61.2 207.4C62.0 207.1 62.9 208.1 63.7 208.0C64.5 207.8 65.4 206.9 66.2 206.5C67.0 206.2 67.9 206.1 68.7 205.8C69.5 205.5 70.4 205.1 71.2 204.6C72.0 204.2 72.9 203.6 73.7 203.3C74.5 203.1 75.4 203.4 76.2 203.3C77.0 203.2 77.9 202.7 78.7 202.8C79.5 202.9 80.4 203.9 81.2 203.9C82.0 203.9 82.9 202.8 83.7 202.8C84.5 202.8 85.4 203.8 86.2 203.9C87.0 204.0 87.9 203.7 88.7 203.4C89.5 203.1 90.4 202.4 91.2 202.0C92.0 201.6 92.9 201.2 93.7 200.9C94.5 200.6 95.4 200.5 96.2 200.4C97.0 200.3 97.9 200.4 98.7 200.3C99.5 200.1 100.4 199.7 101.2 199.5C102.0 199.4 102.9 199.7 103.7 199.4C104.5 199.2 105.4 198.5 106.2 198.0C107.0 197.6 107.9 196.9 108.7 196.8C109.5 196.7 110.4 197.4 111.2 197.4C112.0 197.4 112.9 197.1 113.7 197.0C114.5 196.9 115.4 197.1 116.2 197.0C117.0 196.8 117.9 196.4 118.7 196.1C119.5 195.8 120.4 195.5 121.2 195.2C122.0 194.8 122.9 194.0 123.7 194.0C124.5 193.9 125.4 194.9 126.2 194.9C127.0 194.9 127.9 194.2 128.7 194.0C129.5 193.9 130.4 194.3 131.2 194.1C132.0 193.9 132.9 193.2 133.7 192.9C134.5 192.5 135.4 192.5 136.2 192.1C137.0 191.7 137.9 191.0 138.7 190.6C139.5 190.1 140.4 189.9 141.2 189.6C142.0 189.2 142.9 188.4 143.7 188.3C144.5 188.2 145.4 189.0 146.2 189.0C147.0 188.9 147.9 188.3 148.7 187.9C149.5 187.6 150.4 187.2 151.2 186.9C152.0 186.7 152.9 186.7 153.7 186.5C154.5 186.3 155.4 185.7 156.2 185.5C157.0 185.4 157.9 186.1 158.7 185.7C159.5 185.3 160.4 184.0 161.2 183.3C162.0 182.6 162.9 181.8 163.7 181.4C164.5 180.9 165.4 181.0 166.2 180.4C167.0 179.8 167.9 178.4 168.7 177.8C169.5 177.2 170.4 177.2 171.2 176.8C172.0 176.4 172.9 176.1 173.7 175.6C174.5 175.0 175.4 173.9 176.2 173.7C177.0 173.5 177.9 174.2 178.7 174.2C179.5 174.2 180.4 173.7 181.2 173.7C182.0 173.7 182.9 174.3 183.7 174.2C184.5 174.1 185.4 173.1 186.2 173.1C187.0 173.1 187.9 174.2 188.7 174.1C189.5 174.0 190.4 172.7 191.2 172.5C192.0 172.3 192.9 172.8 193.7 172.9C194.5 172.9 195.4 172.6 196.2 172.6C197.0 172.6 197.9 172.8 198.7 173.1C199.5 173.4 200.4 173.9 201.2 174.4C202.0 175.0 202.9 176.1 203.7 176.3C204.5 176.6 205.4 176.0 206.2 176.1C207.0 176.2 207.9 176.8 208.7 176.9C209.5 177.0 210.4 176.8 211.2 176.7C212.0 176.5 212.9 176.0 213.7 175.9C214.5 175.9 215.4 176.2 216.2 176.1C217.0 176.1 217.9 175.4 218.7 175.5C219.5 175.5 220.4 176.2 221.2 176.4C222.0 176.5 222.9 176.4 223.7 176.6C224.5 176.9 225.4 177.7 226.2 177.9C227.0 178.2 227.9 178.1 228.7 178.2C229.5 178.3 230.4 178.5 231.2 178.5C232.0 178.5 232.9 178.1 233.7 178.0C234.5 178.0 235.4 178.2 236.2 178.1C237.0 178.0 237.9 177.8 238.7 177.4C239.5 177.1 240.4 176.1 241.2 175.8C242.0 175.5 242.9 175.4 243.7 175.5C244.5 175.6 245.4 176.1 246.2 176.2C247.0 176.3 247.9 176.1 248.7 175.9C249.5 175.8 250.4 175.8 251.2 175.4C252.0 175.1 252.9 174.5 253.7 173.9C254.5 173.2 255.4 172.0 256.2 171.6C257.0 171.1 257.9 171.4 258.7 171.1C259.5 170.9 260.4 170.4 261.2 170.1C262.0 169.7 262.9 169.5 263.7 169.1C264.5 168.7 265.4 167.9 266.2 167.9C267.0 167.9 267.9 169.0 268.7 169.0C269.5 169.0 270.4 168.2 271.2 167.9C272.0 167.5 272.9 167.1 273.7 167.1C274.5 167.1 275.4 168.1 276.2 168.0C277.0 167.9 277.9 167.0 278.7 166.6C279.5 166.2 280.4 165.7 281.2 165.7C282.0 165.6 282.9 166.4 283.7 166.4C284.5 166.4 285.4 165.7 286.2 165.7C287.0 165.6 287.9 165.9 288.7 166.1C289.5 166.3 290.4 166.4 291.2 166.7C292.0 167.0 292.9 167.6 293.7 167.7C294.5 167.9 295.4 167.5 296.2 167.7C297.0 167.8 297.9 168.5 298.7 168.8C299.5 169.0 300.4 169.1 301.2 169.0C302.0 169.0 302.9 168.7 303.7 168.4C304.5 168.1 305.4 167.7 306.2 167.4C307.0 167.1 307.9 167.1 308.7 166.7C309.5 166.2 310.4 165.0 311.2 164.7C312.0 164.4 312.9 165.1 313.7 164.9C314.5 164.7 315.4 163.5 316.2 163.5C317.0 163.5 317.9 164.7 318.7 164.9C319.5 165.0 320.4 164.4 321.2 164.4C322.0 164.4 322.9 164.5 323.7 164.9C324.5 165.3 325.4 166.7 326.2 166.9C327.0 167.1 327.9 165.8 328.7 165.9C329.5 166.0 330.4 167.1 331.2 167.4C332.0 167.7 332.9 167.6 333.7 167.5C334.5 167.4 335.4 166.8 336.2 167.0C337.0 167.3 337.9 168.8 338.7 168.9C339.5 169.0 340.4 167.8 341.2 167.8C342.0 167.7 342.9 168.7 343.7 168.8C344.5 168.8 345.4 168.4 346.2 168.1C347.0 167.8 347.9 167.3 348.7 167.1C349.5 166.8 350.4 166.8 351.2 166.5C352.0 166.2 352.9 165.3 353.7 165.2C354.5 165.1 355.4 166.1 356.2 165.9C357.0 165.8 357.9 164.5 358.7 164.2C359.5 163.9 360.4 164.2 361.2 164.1C362.0 164.1 362.9 164.1 363.7 163.8C364.5 163.5 365.4 162.9 366.2 162.4C367.0 161.8 367.9 160.7 368.7 160.3C369.5 160.0 370.4 160.5 371.2 160.4C372.0 160.2 372.9 159.5 373.7 159.4C374.5 159.3 375.4 159.2 376.2 159.5C377.0 159.8 377.9 160.8 378.7 161.2C379.5 161.5 380.4 161.5 381.2 161.6C382.0 161.8 382.9 161.9 383.7 162.1C384.5 162.4 385.4 162.9 386.2 163.2C387.0 163.4 387.9 163.3 388.7 163.5C389.5 163.7 390.4 164.2 391.2 164.4C392.0 164.6 392.9 165.1 393.7 164.7C394.5 164.4 395.4 162.9 396.2 162.4C397.0 161.9 397.9 162.2 398.7 161.7C399.5 161.3 400.4 160.2 401.2 159.6C402.0 159.0 402.9 158.5 403.7 157.9C404.5 157.3 405.4 156.3 406.2 156.1C407.0 156.0 407.9 156.9 408.7 156.8C409.5 156.7 410.4 155.7 411.2 155.4C412.0 155.1 412.9 155.2 413.7 154.8C414.5 154.4 415.4 153.7 416.2 153.1C417.0 152.5 417.9 151.5 418.7 151.2C419.5 150.8 420.4 150.8 421.2 150.9C422.0 151.1 422.9 151.5 423.7 152.1C424.5 152.6 425.4 153.8 426.2 154.4C427.0 155.0 427.9 155.2 428.7 155.8C429.5 156.3 430.4 157.4 431.2 157.7C432.0 158.0 432.9 157.5 433.7 157.6C434.5 157.7 435.4 158.0 436.2 158.2C437.0 158.4 437.9 158.7 438.7 158.9C439.5 159.1 440.4 159.3 441.2 159.5C442.0 159.7 442.9 159.7 443.7 160.0C444.5 160.4 445.4 161.2 446.2 161.6C447.0 161.9 447.9 162.0 448.7 162.2C449.5 162.4 450.4 162.3 451.2 162.9C452.0 163.4 452.9 165.0 453.7 165.5C454.5 166.0 455.4 165.5 456.2 166.0C457.0 166.4 457.9 167.9 458.7 168.5C459.5 169.1 460.4 169.2 461.2 169.5C462.0 169.8 462.9 170.0 463.7 170.3C464.5 170.7 465.4 171.1 466.2 171.7C467.0 172.2 467.9 173.1 468.7 173.7C469.5 174.3 470.4 175.0 471.2 175.2C472.0 175.3 472.9 174.4 473.7 174.7C474.5 175.0 475.4 176.5 476.2 176.9C477.0 177.3 477.9 176.8 478.7 177.0C479.5 177.3 480.4 178.2 481.2 178.4C482.0 178.7 482.9 178.5 483.7 178.4C484.5 178.3 485.4 178.2 486.2 177.9C487.0 177.6 487.9 177.0 488.7 176.7C489.5 176.5 490.4 176.2 491.2 176.3C492.0 176.4 492.9 177.3 493.7 177.5C494.5 177.6 495.4 177.2 496.2 177.1C497.0 176.9 497.9 177.0 498.7 176.8C499.5 176.5 500.4 176.0 501.2 175.5C502.0 175.0 502.9 174.3 503.7 174.0C504.5 173.8 505.4 173.9 506.2 174.0C507.0 174.0 507.9 174.6 508.7 174.4C509.5 174.1 510.4 172.6 511.2 172.2C512.0 171.8 512.9 172.1 513.7 172.0C514.5 171.9 515.4 171.2 516.2 171.6C517.0 172.0 517.9 173.9 518.7 174.4C519.5 174.9 520.4 174.6 521.2 174.8C522.0 174.9 522.9 175.1 523.7 175.6C524.5 176.0 525.4 176.9 526.2 177.4C527.0 177.8 527.9 177.9 528.7 178.4C529.5 178.8 530.4 179.5 531.2 180.1C532.0 180.6 532.9 181.3 533.7 181.7C534.5 182.2 535.4 182.8 536.2 182.7C537.0 182.6 537.9 181.5 538.7 181.3C539.5 181.1 540.4 181.8 541.2 181.7C542.0 181.5 542.9 180.6 543.7 180.4C544.5 180.3 545.4 180.6 546.2 180.7C547.0 180.8 547.9 181.2 548.7 181.0C549.5 180.8 550.4 179.7 551.2 179.6C552.0 179.5 552.9 180.3 553.7 180.2C554.5 180.2 555.4 179.4 556.2 179.4C557.0 179.4 557.9 179.9 558.7 180.3C559.5 180.7 560.4 181.5 561.2 181.6C562.0 181.7 562.9 180.7 563.7 180.8C564.5 181.0 565.4 182.1 566.2 182.4C567.0 182.8 567.9 182.8 568.7 183.0C569.5 183.3 570.4 183.6 571.2 183.9C572.0 184.2 572.9 184.7 573.7 184.8C574.5 184.9 575.4 184.7 576.2 184.5C577.0 184.3 577.9 183.8 578.7 183.7C579.5 183.6 580.4 183.7 581.2 183.8C582.0 183.9 582.9 184.3 583.7 184.4C584.5 184.5 585.4 184.1 586.2 184.1C587.0 184.2 587.9 184.7 588.7 184.5C589.5 184.3 590.4 183.1 591.2 182.9C592.0 182.8 592.9 183.5 593.7 183.3C594.5 183.2 595.4 182.6 596.2 182.1C597.0 181.7 597.9 181.1 598.7 180.8C599.5 180.5 600.4 180.2 601.2 180.2C602.0 180.3 602.9 181.0 603.7 181.0C604.5 181.0 605.4 180.3 606.2 180.2C607.0 180.0 607.9 180.4 608.7 180.2C609.5 180.1 610.4 179.3 611.2 179.4C612.0 179.4 612.9 180.6 613.7 180.5C614.5 180.5 615.4 179.1 616.2 179.1C617.0 179.0 617.9 179.9 618.7 180.1C619.5 180.4 620.4 180.6 621.2 180.6C622.0 180.5 622.9 179.7 623.7 179.8C624.5 179.8 625.4 180.3 626.2 180.8C627.0 181.2 627.9 181.9 628.7 182.3C629.5 182.8 630.4 183.0 631.2 183.6C632.0 184.3 632.9 185.7 633.7 186.3C634.5 186.9 635.4 186.9 636.2 187.2C637.0 187.6 637.9 188.0 638.7 188.3C639.5 188.5 640.4 188.4 641.2 188.9C642.0 189.3 642.9 190.6 643.7 191.1C644.5 191.5 645.4 191.1 646.2 191.4C647.0 191.7 647.9 192.1 648.7 192.6C649.5 193.2 650.4 194.2 651.2 194.8C652.0 195.5 652.9 196.0 653.7 196.7C654.5 197.3 655.4 198.0 656.2 198.7C657.0 199.3 657.9 200.0 658.7 200.4C659.5 200.8 660.4 200.5 661.2 200.9C662.0 201.3 662.9 202.5 663.7 202.9C664.5 203.4 665.4 203.4 666.2 203.7C667.0 203.9 667.9 204.3 668.7 204.3C669.5 204.2 670.4 203.2 671.2 203.5C672.0 203.7 672.9 205.1 673.7 205.6C674.5 206.1 675.4 206.1 676.2 206.5C677.0 206.9 677.9 207.6 678.7 208.0C679.5 208.3 680.4 208.2 681.2 208.6C682.0 209.1 682.9 210.1 683.7 210.6C684.5 211.2 685.4 211.4 686.2 211.8C687.0 212.1 687.9 212.4 688.7 212.7C689.5 212.9 690.4 213.3 691.2 213.3C692.0 213.3 692.9 212.8 693.7 212.9C694.5 213.0 695.4 213.6 696.2 213.8C697.0 214.0 697.9 213.6 698.7 213.9C699.5 214.3 700.4 215.5 701.2 215.9C702.0 216.2 702.9 215.8 703.7 216.0C704.5 216.3 705.4 217.4 706.2 217.4C707.0 217.4 707.9 216.1 708.7 215.8C709.5 215.6 710.4 215.7 711.2 215.8C712.0 215.8 712.9 216.0 713.7 216.2C714.5 216.5 715.4 216.8 716.2 217.3C717.0 217.7 717.9 218.2 718.7 218.9C719.5 219.5 720.4 220.4 721.2 221.1C722.0 221.8 722.9 222.9 723.7 223.1C724.5 223.3 725.4 222.3 726.2 222.3C727.0 222.2 727.9 223.0 728.7 222.9C729.5 222.8 730.4 221.9 731.2 221.9C732.0 221.9 732.9 222.8 733.7 223.0C734.5 223.3 735.4 223.3 736.2 223.5C737.0 223.7 737.9 223.7 738.7 224.0C739.5 224.3 740.4 224.7 741.2 225.4C742.0 226.0 742.9 227.4 743.7 228.1C744.5 228.7 745.4 228.5 746.2 229.1C747.0 229.7 747.9 231.4 748.7 231.8C749.5 232.2 750.4 231.7 751.2 231.6C752.0 231.6 752.9 231.5 753.7 231.4C754.5 231.4 755.4 231.5 756.2 231.3C757.0 231.1 757.9 230.6 758.7 230.4C759.5 230.1 760.4 230.1 761.2 229.7C762.0 229.3 762.9 228.5 763.7 228.1C764.5 227.7 765.4 227.6 766.2 227.1C767.0 226.7 767.9 225.7 768.7 225.5C769.5 225.3 770.4 225.8 771.2 225.9C772.0 226.0 772.9 226.0 773.7 226.2C774.5 226.4 775.4 227.0 776.2 227.3C777.0 227.6 777.9 227.7 778.7 228.2C779.5 228.8 780.4 230.0 781.2 230.7C782.0 231.3 782.9 231.4 783.7 232.0C784.5 232.6 785.4 233.5 786.2 234.1C787.0 234.7 787.9 235.0 788.7 235.5C789.5 236.0 790.4 236.8 791.2 237.1C792.0 237.4 792.9 237.0 793.7 237.5C794.5 238.0 795.4 239.5 796.2 240.1C797.0 240.8 797.9 240.8 798.7 241.4C799.5 241.9 800.4 243.0 801.2 243.5C802.0 244.0 802.9 244.2 803.7 244.6C804.5 244.9 805.4 245.0 806.2 245.6C807.0 246.2 807.9 247.3 808.7 248.3C809.5 249.4 810.4 250.9 811.2 251.9C812.0 252.8 812.9 253.1 813.7 253.9C814.5 254.7 815.4 255.7 816.2 256.6C817.0 257.4 817.9 258.3 818.7 258.9C819.5 259.5 820.4 259.5 821.2 260.2C822.0 260.8 822.9 261.9 823.7 262.8C824.5 263.7 825.4 264.6 826.2 265.5C827.0 266.5 827.9 267.9 828.7 268.6C829.5 269.3 830.4 269.8 831.2 269.9C832.0 270.0 832.9 269.3 833.7 269.1C834.5 268.8 835.4 268.5 836.2 268.3C837.0 268.0 837.9 267.7 838.7 267.7C839.5 267.7 840.4 268.1 841.2 268.4C842.0 268.7 842.9 269.0 843.7 269.6C844.5 270.1 845.4 271.5 846.2 271.9C847.0 272.3 847.9 271.8 848.7 272.0C849.5 272.3 850.4 273.0 851.2 273.5C852.0 273.9 852.9 274.1 853.7 274.5C854.5 275.0 855.4 275.5 856.2 276.3C857.0 277.2 857.9 278.7 858.7 279.6C859.5 280.5 860.4 281.1 861.2 281.6C862.0 282.0 862.9 281.9 863.7 282.1C864.5 282.4 865.4 282.8 866.2 283.1C867.0 283.4 867.9 283.9 868.7 283.9C869.5 283.9 870.4 283.1 871.2 283.1C872.0 283.0 872.9 283.4 873.7 283.5C874.5 283.7 875.4 284.0 876.2 283.9C877.0 283.8 877.9 283.4 878.7 283.0C879.5 282.6 880.4 281.8 881.2 281.5C882.0 281.3 882.9 281.4 883.7 281.5C884.5 281.6 885.4 281.6 886.2 282.1C887.0 282.6 887.9 283.9 888.7 284.4C889.5 284.9 890.4 284.5 891.2 285.0C892.0 285.5 892.9 286.9 893.7 287.5C894.5 288.2 895.4 288.2 896.2 288.7C897.0 289.2 897.9 290.1 898.7 290.5C899.5 290.9 900.4 290.5 901.2 291.0C902.0 291.5 902.9 293.0 903.7 293.6C904.5 294.1 905.4 294.1 906.2 294.3C907.0 294.6 907.9 294.6 908.7 295.0C909.5 295.5 910.4 296.6 911.2 297.0C912.0 297.4 912.9 297.4 913.7 297.7C914.5 297.9 915.4 298.2 916.2 298.6C917.0 298.9 917.9 299.1 918.7 299.7C919.5 300.3 920.4 301.5 921.2 302.0C922.0 302.5 922.9 302.3 923.7 302.6C924.5 302.8 925.4 303.0 926.2 303.6C927.0 304.1 927.9 305.6 928.7 306.0C929.5 306.4 930.4 305.7 931.2 306.1C932.0 306.5 932.9 308.0 933.7 308.4C934.5 308.9 935.4 308.5 936.2 308.8C937.0 309.1 937.9 309.6 938.7 310.2C939.5 310.8 940.4 312.0 941.2 312.6C942.0 313.2 942.9 313.4 943.7 313.8C944.5 314.2 945.4 314.7 946.2 315.2C947.0 315.7 947.9 316.5 948.7 316.9C949.5 317.3 950.4 317.2 951.2 317.6C952.0 318.1 952.9 319.1 953.7 319.6C954.5 320.2 955.4 320.3 956.2 320.8C957.0 321.3 957.9 322.1 958.7 322.6C959.5 323.1 960.4 323.4 961.2 324.0C962.0 324.6 962.9 325.2 963.7 326.0C964.5 326.7 965.4 327.6 966.2 328.5C967.0 329.4 967.9 330.2 968.7 331.3C969.5 332.4 970.4 334.1 971.2 335.4C972.0 336.7 972.9 338.0 973.7 339.1C974.5 340.3 975.4 341.8 976.2 342.2C977.0 342.6 977.9 341.8 978.7 341.6C979.5 341.3 980.4 340.8 981.2 340.7C982.0 340.5 982.9 340.8 983.7 340.7C984.5 340.6 985.4 340.3 986.2 340.3C987.0 340.2 987.9 340.6 988.7 340.5C989.5 340.3 990.4 339.6 991.2 339.4C992.0 339.1 992.9 338.8 993.7 339.0C994.5 339.3 995.4 340.4 996.2 341.0C997.0 341.6 997.9 342.1 998.7 342.7C999.5 343.3 1000.4 344.1 1001.2 344.7C1002.0 345.3 1002.9 345.7 1003.7 346.3C1004.5 346.8 1005.4 347.7 1006.2 348.1C1007.0 348.4 1007.9 348.2 1008.7 348.3C1009.5 348.5 1010.4 348.6 1011.2 348.9C1012.0 349.2 1012.9 349.8 1013.7 350.2C1014.5 350.7 1015.4 351.4 1016.2 351.8C1017.0 352.2 1017.9 352.6 1018.7 352.7C1019.5 352.8 1020.4 352.4 1021.2 352.3C1022.0 352.2 1022.9 352.3 1023.7 352.1C1024.5 351.9 1025.4 351.6 1026.2 351.3C1027.0 351.0 1027.9 350.7 1028.7 350.4C1029.5 350.1 1030.4 349.0 1031.2 349.4C1032.0 349.7 1032.9 351.8 1033.7 352.5C1034.5 353.1 1035.4 352.7 1036.2 353.2C1037.0 353.7 1037.9 354.7 1038.7 355.5C1039.5 356.2 1040.4 356.5 1041.2 357.6C1042.0 358.6 1042.9 360.1 1043.7 361.7C1044.5 363.2 1045.4 365.2 1046.2 366.9C1047.0 368.6 1047.9 370.1 1048.7 372.0C1049.5 373.8 1050.4 376.5 1051.2 378.0C1052.0 379.6 1052.9 380.5 1053.7 381.1C1054.5 381.7 1055.4 381.6 1056.2 381.6C1057.0 381.6 1057.9 381.3 1058.7 381.2C1059.5 381.0 1060.4 381.0 1061.2 380.9C1062.0 380.7 1062.9 380.4 1063.7 380.2C1064.5 380.1 1065.4 380.3 1066.2 380.1C1067.0 380.0 1067.9 379.3 1068.7 379.3C1069.5 379.3 1070.4 379.9 1071.2 380.2C1072.0 380.5 1072.9 381.1 1073.7 381.2C1074.5 381.4 1075.4 380.8 1076.2 381.0C1077.0 381.2 1077.9 382.3 1078.7 382.6C1079.5 382.9 1080.4 382.7 1081.2 382.9C1082.0 383.2 1082.9 384.1 1083.7 384.3C1084.5 384.5 1085.4 384.2 1086.2 384.2C1087.0 384.3 1087.9 384.4 1088.7 384.6C1089.5 384.8 1090.4 385.4 1091.2 385.5C1092.0 385.5 1092.9 385.0 1093.7 385.1C1094.5 385.1 1095.4 385.5 1096.2 385.7C1097.0 385.9 1097.9 386.0 1098.7 386.2C1099.5 386.5 1100.4 387.0 1101.2 387.3C1102.0 387.5 1102.9 387.5 1103.7 387.7C1104.5 387.8 1105.4 387.6 1106.2 388.2C1107.0 388.7 1107.9 390.3 1108.7 391.0C1109.5 391.7 1110.4 392.2 1111.2 392.5C1112.0 392.9 1112.9 392.6 1113.7 393.1C1114.5 393.6 1115.4 395.1 1116.2 395.4C1117.0 395.7 1117.9 395.1 1118.7 394.8C1119.5 394.5 1120.4 394.1 1121.2 393.7C1122.0 393.4 1122.9 392.8 1123.7 392.6C1124.5 392.3 1125.4 391.8 1126.2 392.3C1127.0 392.8 1127.9 394.7 1128.7 395.7C1129.5 396.7 1130.4 397.5 1131.2 398.3C1132.0 399.0 1132.9 399.6 1133.7 400.4C1134.5 401.2 1135.4 402.3 1136.2 403.1C1137.0 403.8 1137.9 404.0 1138.7 404.8C1139.5 405.5 1140.4 406.8 1141.2 407.7C1142.0 408.5 1142.9 409.0 1143.7 409.8C1144.5 410.5 1145.4 411.3 1146.2 412.0C1147.0 412.7 1147.9 413.3 1148.7 414.1C1149.5 414.8 1150.4 415.7 1151.2 416.5C1152.0 417.2 1152.9 417.9 1153.7 418.5C1154.5 419.0 1155.4 419.1 1156.2 419.8C1157.0 420.6 1157.9 422.2 1158.7 423.1C1159.5 424.0 1160.4 424.8 1161.2 425.3C1162.0 425.8 1162.9 425.5 1163.7 426.0C1164.5 426.5 1165.4 427.8 1166.2 428.3C1167.0 428.7 1167.9 428.5 1168.7 428.7C1169.5 428.9 1170.4 428.9 1171.2 429.4C1172.0 429.8 1172.9 430.5 1173.7 431.3C1174.5 432.1 1175.4 433.1 1176.2 434.1C1177.0 435.1 1177.9 435.8 1178.7 437.1C1179.5 438.4 1180.4 440.7 1181.2 441.8C1182.0 442.9 1182.9 442.8 1183.7 443.9C1184.5 444.9 1185.4 447.1 1186.2 448.2C1187.0 449.3 1187.9 449.5 1188.7 450.6C1189.5 451.6 1190.4 453.3 1191.2 454.6C1192.0 455.8 1192.9 457.3 1193.7 458.0C1194.5 458.7 1195.4 457.9 1196.2 458.6C1197.0 459.2 1197.9 461.4 1198.7 462.1C1199.5 462.9 1200.4 462.0 1201.2 462.8C1202.0 463.6 1202.9 465.8 1203.7 466.8C1204.5 467.8 1205.4 468.3 1206.2 468.8C1207.0 469.4 1207.9 469.4 1208.7 470.2C1209.5 471.0 1210.4 472.6 1211.2 473.8C1212.0 475.0 1212.9 476.2 1213.7 477.3C1214.5 478.4 1215.4 479.3 1216.2 480.5C1217.0 481.7 1217.9 483.4 1218.7 484.6C1219.5 485.8 1220.4 486.9 1221.2 487.6C1222.0 488.4 1222.9 488.9 1223.7 488.9C1224.5 489.0 1225.4 488.0 1226.2 488.1C1227.0 488.2 1227.9 489.1 1228.7 489.4C1229.5 489.7 1230.4 489.6 1231.2 489.8C1232.0 490.0 1232.9 490.2 1233.7 490.5C1234.5 490.8 1235.4 491.2 1236.2 491.6C1237.0 492.0 1237.9 492.5 1238.7 492.9C1239.5 493.3 1240.4 493.4 1241.2 494.1C1242.0 494.8 1242.9 496.3 1243.7 496.9C1244.5 497.6 1245.4 497.6 1246.2 498.0C1247.0 498.3 1247.9 498.7 1248.7 499.1C1249.5 499.5 1250.4 500.0 1251.2 500.5C1252.0 501.0 1252.9 501.8 1253.7 501.9C1254.5 502.0 1255.4 501.0 1256.2 501.2C1257.0 501.4 1257.9 502.7 1258.7 503.1C1259.5 503.5 1260.4 503.4 1261.2 503.6C1262.0 503.8 1262.9 504.0 1263.7 504.3C1264.5 504.6 1265.4 504.9 1266.2 505.3C1267.0 505.8 1267.9 506.3 1268.7 506.8C1269.5 507.3 1270.4 507.9 1271.2 508.4C1272.0 508.9 1272.9 509.2 1273.7 509.7C1274.5 510.2 1275.8 511.0 1276.2 511.3" fill="none" stroke="#00b0f0" stroke-width="8.3" stroke-linejoin="round" stroke-linecap="round" />
<circle cx="420.5" cy="151.4" r="11" fill="#ffff00" stroke="#00b0f0" stroke-width="5"/>
<circle cx="1262.4" cy="504.1" r="11" fill="#ffff00" stroke="#00b0f0" stroke-width="5"/>
<text x="313.8" y="206" font-family='"Liberation Sans", sans-serif' font-weight="bold" font-size="18.5" fill="#1a6fc0" textLength="138.4" lengthAdjust="spacingAndGlyphs">759,35мм.рт.ст.</text>
<text x="1026.6" y="464.3" font-family='"Liberation Sans", sans-serif' font-weight="bold" font-size="18.5" fill="#1a6fc0" textLength="139.3" lengthAdjust="spacingAndGlyphs">753,39мм.рт.ст.</text></g><path d="M52 717.5H1277.5M58.5 112.5V717.5M1277.5 112.5V717.5" stroke="#878787" stroke-width="1" fill="none"/>
</svg>
</body></html>
